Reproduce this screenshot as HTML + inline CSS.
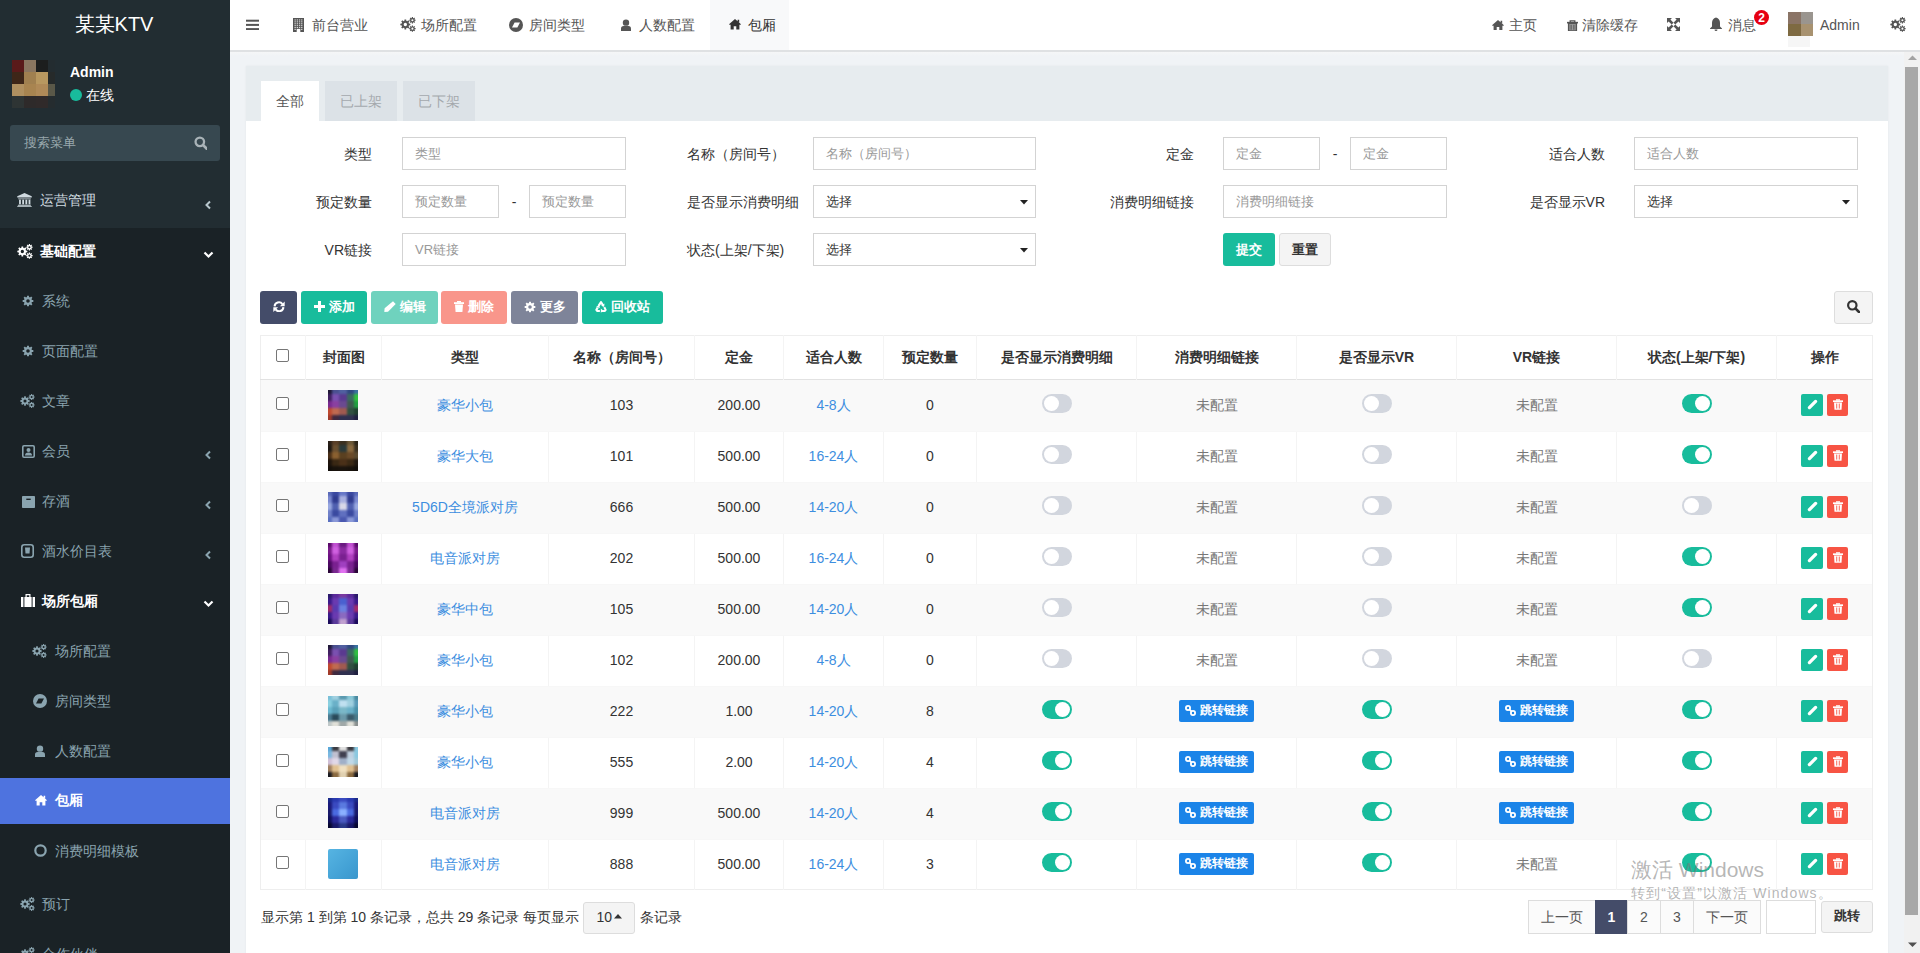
<!DOCTYPE html>
<html><head><meta charset="utf-8"><title>某某KTV</title>
<style>
html,body{margin:0;padding:0;width:1920px;height:953px;overflow:hidden;background:#ecf0f5;font-family:"Liberation Sans", sans-serif;}
.a{position:absolute;white-space:nowrap;}
</style></head><body>
<div class="a" style="left:0px;top:0px;width:230px;height:228px;background:#222d32"></div>
<div class="a" style="left:0px;top:228px;width:230px;height:725px;background:#1a2226"></div>
<div class="a" style="left:-1.0px;width:230px;text-align:center;top:14.0px;font-size:20px;line-height:20px;color:#fff;font-weight:500;">某某KTV</div>
<div class="a" style="left:12px;top:59.5px;width:12px;height:12px;background:#5a1a1a"></div>
<div class="a" style="left:24px;top:59.5px;width:12px;height:12px;background:#8a7660"></div>
<div class="a" style="left:36px;top:59.5px;width:12px;height:12px;background:#1c1e1e"></div>
<div class="a" style="left:48px;top:59.5px;width:7px;height:12px;background:#232c30"></div>
<div class="a" style="left:12px;top:71.5px;width:12px;height:12px;background:#3e2618"></div>
<div class="a" style="left:24px;top:71.5px;width:12px;height:12px;background:#a08050"></div>
<div class="a" style="left:36px;top:71.5px;width:12px;height:12px;background:#b89860"></div>
<div class="a" style="left:48px;top:71.5px;width:7px;height:12px;background:#262a2a"></div>
<div class="a" style="left:12px;top:83.5px;width:12px;height:12px;background:#b09060"></div>
<div class="a" style="left:24px;top:83.5px;width:12px;height:12px;background:#a88450"></div>
<div class="a" style="left:36px;top:83.5px;width:12px;height:12px;background:#b08a58"></div>
<div class="a" style="left:48px;top:83.5px;width:7px;height:12px;background:#5a5848"></div>
<div class="a" style="left:12px;top:95.5px;width:12px;height:12px;background:#2e3434"></div>
<div class="a" style="left:24px;top:95.5px;width:12px;height:12px;background:#2e2a2a"></div>
<div class="a" style="left:36px;top:95.5px;width:12px;height:12px;background:#302a2a"></div>
<div class="a" style="left:48px;top:95.5px;width:7px;height:12px;background:#252c2f"></div>
<div class="a" style="left:70px;top:62.0px;font-size:14px;line-height:20px;color:#fff;font-weight:bold;">Admin</div>
<div class="a" style="left:70px;top:89px;width:12px;height:12px;background:#18bc9c;border-radius:50%"></div>
<div class="a" style="left:86px;top:85.0px;font-size:14px;line-height:20px;color:#fff;">在线</div>
<div class="a" style="left:10px;top:125px;width:210px;height:36px;background:#374850;border-radius:3px"></div>
<div class="a" style="left:24px;top:132.5px;font-size:13px;line-height:20px;color:#9aa8ae;">搜索菜单</div>
<div class="a" style="left:193.5px;top:136px;line-height:0"><svg width="13.5" height="13.5" viewBox="0 0 13 13" style=""><circle cx="5.6" cy="5.6" r="4.1" fill="none" stroke="#a9b3b8" stroke-width="2.2"/><path d="M8.8 8.8 L12.3 12.3" stroke="#a9b3b8" stroke-width="2.6" stroke-linecap="round"/></svg></div>
<div class="a" style="left:16.5px;top:192.5px;line-height:0"><svg width="15" height="14.5" viewBox="0 0 16 16" style=""><path fill="#d0dae0" d="M8 0 L16 3.5 V5 H0 V3.5 Z M1 6 H15 V7 H1 Z M2 7.5 H4 V12.5 H2 Z M5.5 7.5 H7.5 V12.5 H5.5 Z M9 7.5 H11 V12.5 H9 Z M12.5 7.5 H14.5 V12.5 H12.5 Z M1 13 H15 V14.2 H0.5 Z M0 14.5 H16 V16 H0 Z"/></svg></div>
<div class="a" style="left:40px;top:189.6px;font-size:14px;line-height:20px;color:#d3dde2;">运营管理</div>
<div class="a" style="left:204px;top:200px;line-height:0"><svg width="8" height="10" viewBox="0 0 8 10" style=""><path d="M6 1.5 L2.5 5 L6 8.5" fill="none" stroke="#b8c7ce" stroke-width="2"/></svg></div>
<div class="a" style="left:17px;top:244px;line-height:0"><svg width="16" height="14.93" viewBox="0 0 19.2 17.92" style=""><path fill="#fff" fill-rule="nonzero" d="M10.75 7.81 L12.42 7.96 L12.42 9.96 L10.75 10.11 L10.29 11.22 L11.36 12.51 L9.95 13.92 L8.66 12.85 L7.55 13.31 L7.40 14.98 L5.40 14.98 L5.25 13.31 L4.14 12.85 L2.85 13.92 L1.44 12.51 L2.51 11.22 L2.05 10.11 L0.38 9.96 L0.38 7.96 L2.05 7.81 L2.51 6.70 L1.44 5.41 L2.85 4.00 L4.14 5.07 L5.25 4.61 L5.40 2.94 L7.40 2.94 L7.55 4.61 L8.66 5.07 L9.95 4.00 L11.36 5.41 L10.29 6.70 Z M4.40 8.96 a2.00 2.00 0 1 0 4.00 0 a2.00 2.00 0 1 0 -4.00 0 ZM17.60 3.15 L18.74 3.21 L18.74 4.59 L17.60 4.65 L17.34 5.28 L18.10 6.13 L17.13 7.10 L16.28 6.34 L15.65 6.60 L15.59 7.74 L14.21 7.74 L14.15 6.60 L13.52 6.34 L12.67 7.10 L11.70 6.13 L12.46 5.28 L12.20 4.65 L11.06 4.59 L11.06 3.21 L12.20 3.15 L12.46 2.52 L11.70 1.67 L12.67 0.70 L13.52 1.46 L14.15 1.20 L14.21 0.06 L15.59 0.06 L15.65 1.20 L16.28 1.46 L17.13 0.70 L18.10 1.67 L17.34 2.52 Z M13.65 3.90 a1.25 1.25 0 1 0 2.50 0 a1.25 1.25 0 1 0 -2.50 0 ZM17.60 13.25 L18.74 13.31 L18.74 14.69 L17.60 14.75 L17.34 15.38 L18.10 16.23 L17.13 17.20 L16.28 16.44 L15.65 16.70 L15.59 17.84 L14.21 17.84 L14.15 16.70 L13.52 16.44 L12.67 17.20 L11.70 16.23 L12.46 15.38 L12.20 14.75 L11.06 14.69 L11.06 13.31 L12.20 13.25 L12.46 12.62 L11.70 11.77 L12.67 10.80 L13.52 11.56 L14.15 11.30 L14.21 10.16 L15.59 10.16 L15.65 11.30 L16.28 11.56 L17.13 10.80 L18.10 11.77 L17.34 12.62 Z M13.65 14.00 a1.25 1.25 0 1 0 2.50 0 a1.25 1.25 0 1 0 -2.50 0 Z"/></svg></div>
<div class="a" style="left:40px;top:241.0px;font-size:14px;line-height:20px;color:#fff;font-weight:bold;">基础配置</div>
<div class="a" style="left:203px;top:251px;line-height:0"><svg width="11" height="8" viewBox="0 0 11 8" style=""><path d="M1.5 1.5 L5.5 5.5 L9.5 1.5" fill="none" stroke="#fff" stroke-width="2.2"/></svg></div>
<div class="a" style="left:22px;top:295px;line-height:0"><svg width="12" height="12" viewBox="0 0 16 16" style=""><path fill="#8aa4af" fill-rule="evenodd" d="M13.22 6.62 L15.10 6.82 L15.10 9.18 L13.22 9.38 L12.67 10.71 L13.86 12.19 L12.19 13.86 L10.71 12.67 L9.38 13.22 L9.18 15.10 L6.82 15.10 L6.62 13.22 L5.29 12.67 L3.81 13.86 L2.14 12.19 L3.33 10.71 L2.78 9.38 L0.90 9.18 L0.90 6.82 L2.78 6.62 L3.33 5.29 L2.14 3.81 L3.81 2.14 L5.29 3.33 L6.62 2.78 L6.82 0.90 L9.18 0.90 L9.38 2.78 L10.71 3.33 L12.19 2.14 L13.86 3.81 L12.67 5.29 Z M5.60 8.00 a2.40 2.40 0 1 0 4.80 0 a2.40 2.40 0 1 0 -4.80 0 Z"/></svg></div>
<div class="a" style="left:42px;top:291.0px;font-size:14px;line-height:20px;color:#8aa4af;">系统</div>
<div class="a" style="left:22px;top:345px;line-height:0"><svg width="12" height="12" viewBox="0 0 16 16" style=""><path fill="#8aa4af" fill-rule="evenodd" d="M13.22 6.62 L15.10 6.82 L15.10 9.18 L13.22 9.38 L12.67 10.71 L13.86 12.19 L12.19 13.86 L10.71 12.67 L9.38 13.22 L9.18 15.10 L6.82 15.10 L6.62 13.22 L5.29 12.67 L3.81 13.86 L2.14 12.19 L3.33 10.71 L2.78 9.38 L0.90 9.18 L0.90 6.82 L2.78 6.62 L3.33 5.29 L2.14 3.81 L3.81 2.14 L5.29 3.33 L6.62 2.78 L6.82 0.90 L9.18 0.90 L9.38 2.78 L10.71 3.33 L12.19 2.14 L13.86 3.81 L12.67 5.29 Z M5.60 8.00 a2.40 2.40 0 1 0 4.80 0 a2.40 2.40 0 1 0 -4.80 0 Z"/></svg></div>
<div class="a" style="left:42px;top:341.0px;font-size:14px;line-height:20px;color:#8aa4af;">页面配置</div>
<div class="a" style="left:20px;top:394px;line-height:0"><svg width="15" height="14.0" viewBox="0 0 19.2 17.92" style=""><path fill="#8aa4af" fill-rule="nonzero" d="M10.75 7.81 L12.42 7.96 L12.42 9.96 L10.75 10.11 L10.29 11.22 L11.36 12.51 L9.95 13.92 L8.66 12.85 L7.55 13.31 L7.40 14.98 L5.40 14.98 L5.25 13.31 L4.14 12.85 L2.85 13.92 L1.44 12.51 L2.51 11.22 L2.05 10.11 L0.38 9.96 L0.38 7.96 L2.05 7.81 L2.51 6.70 L1.44 5.41 L2.85 4.00 L4.14 5.07 L5.25 4.61 L5.40 2.94 L7.40 2.94 L7.55 4.61 L8.66 5.07 L9.95 4.00 L11.36 5.41 L10.29 6.70 Z M4.40 8.96 a2.00 2.00 0 1 0 4.00 0 a2.00 2.00 0 1 0 -4.00 0 ZM17.60 3.15 L18.74 3.21 L18.74 4.59 L17.60 4.65 L17.34 5.28 L18.10 6.13 L17.13 7.10 L16.28 6.34 L15.65 6.60 L15.59 7.74 L14.21 7.74 L14.15 6.60 L13.52 6.34 L12.67 7.10 L11.70 6.13 L12.46 5.28 L12.20 4.65 L11.06 4.59 L11.06 3.21 L12.20 3.15 L12.46 2.52 L11.70 1.67 L12.67 0.70 L13.52 1.46 L14.15 1.20 L14.21 0.06 L15.59 0.06 L15.65 1.20 L16.28 1.46 L17.13 0.70 L18.10 1.67 L17.34 2.52 Z M13.65 3.90 a1.25 1.25 0 1 0 2.50 0 a1.25 1.25 0 1 0 -2.50 0 ZM17.60 13.25 L18.74 13.31 L18.74 14.69 L17.60 14.75 L17.34 15.38 L18.10 16.23 L17.13 17.20 L16.28 16.44 L15.65 16.70 L15.59 17.84 L14.21 17.84 L14.15 16.70 L13.52 16.44 L12.67 17.20 L11.70 16.23 L12.46 15.38 L12.20 14.75 L11.06 14.69 L11.06 13.31 L12.20 13.25 L12.46 12.62 L11.70 11.77 L12.67 10.80 L13.52 11.56 L14.15 11.30 L14.21 10.16 L15.59 10.16 L15.65 11.30 L16.28 11.56 L17.13 10.80 L18.10 11.77 L17.34 12.62 Z M13.65 14.00 a1.25 1.25 0 1 0 2.50 0 a1.25 1.25 0 1 0 -2.50 0 Z"/></svg></div>
<div class="a" style="left:42px;top:391.0px;font-size:14px;line-height:20px;color:#8aa4af;">文章</div>
<div class="a" style="left:21.5px;top:444.5px;line-height:0"><svg width="13" height="13" viewBox="0 0 13 13" style=""><rect x="0.8" y="0.8" width="11.4" height="11.4" rx="1.2" fill="none" stroke="#8aa4af" stroke-width="1.6"/><circle cx="6.5" cy="5" r="2" fill="#8aa4af"/><path d="M3 10.5 Q3 7.6 6.5 7.6 Q10 7.6 10 10.5 Z" fill="#8aa4af"/></svg></div>
<div class="a" style="left:42px;top:441.0px;font-size:14px;line-height:20px;color:#8aa4af;">会员</div>
<div class="a" style="left:204px;top:450px;line-height:0"><svg width="8" height="10" viewBox="0 0 8 10" style=""><path d="M6 1.5 L2.5 5 L6 8.5" fill="none" stroke="#8aa4af" stroke-width="2"/></svg></div>
<div class="a" style="left:21.5px;top:495.5px;line-height:0"><svg width="13" height="12" viewBox="0 0 13 12" style=""><rect x="0" y="0" width="13" height="12" rx="0.8" fill="#8aa4af"/><rect x="4.3" y="2.6" width="4.4" height="1.4" fill="#1a2226"/></svg></div>
<div class="a" style="left:42px;top:491.0px;font-size:14px;line-height:20px;color:#8aa4af;">存酒</div>
<div class="a" style="left:204px;top:500px;line-height:0"><svg width="8" height="10" viewBox="0 0 8 10" style=""><path d="M6 1.5 L2.5 5 L6 8.5" fill="none" stroke="#8aa4af" stroke-width="2"/></svg></div>
<div class="a" style="left:21px;top:544px;line-height:0"><svg width="13" height="14" viewBox="0 0 13 14" style=""><rect x="0.8" y="0.8" width="11.4" height="12.4" rx="2.5" fill="none" stroke="#8aa4af" stroke-width="1.6"/><path d="M4 3.5 H9 L8.5 9.5 H4.5 Z" fill="#8aa4af"/></svg></div>
<div class="a" style="left:42px;top:541.0px;font-size:14px;line-height:20px;color:#8aa4af;">酒水价目表</div>
<div class="a" style="left:204px;top:550px;line-height:0"><svg width="8" height="10" viewBox="0 0 8 10" style=""><path d="M6 1.5 L2.5 5 L6 8.5" fill="none" stroke="#8aa4af" stroke-width="2"/></svg></div>
<div class="a" style="left:21px;top:594px;line-height:0"><svg width="14" height="13" viewBox="0 0 14 13" style=""><path fill="#fff" d="M4.5 0 H9.5 V3 H8.3 V1.2 H5.7 V3 H4.5 Z M0 3 H14 V13 H0 Z"/><rect x="2.4" y="3" width="1" height="10" fill="#1a2226"/><rect x="10.6" y="3" width="1" height="10" fill="#1a2226"/></svg></div>
<div class="a" style="left:42px;top:591.0px;font-size:14px;line-height:20px;color:#fff;font-weight:bold;">场所包厢</div>
<div class="a" style="left:203px;top:600px;line-height:0"><svg width="11" height="8" viewBox="0 0 11 8" style=""><path d="M1.5 1.5 L5.5 5.5 L9.5 1.5" fill="none" stroke="#fff" stroke-width="2.2"/></svg></div>
<div class="a" style="left:32px;top:644px;line-height:0"><svg width="15" height="14.0" viewBox="0 0 19.2 17.92" style=""><path fill="#8aa4af" fill-rule="nonzero" d="M10.75 7.81 L12.42 7.96 L12.42 9.96 L10.75 10.11 L10.29 11.22 L11.36 12.51 L9.95 13.92 L8.66 12.85 L7.55 13.31 L7.40 14.98 L5.40 14.98 L5.25 13.31 L4.14 12.85 L2.85 13.92 L1.44 12.51 L2.51 11.22 L2.05 10.11 L0.38 9.96 L0.38 7.96 L2.05 7.81 L2.51 6.70 L1.44 5.41 L2.85 4.00 L4.14 5.07 L5.25 4.61 L5.40 2.94 L7.40 2.94 L7.55 4.61 L8.66 5.07 L9.95 4.00 L11.36 5.41 L10.29 6.70 Z M4.40 8.96 a2.00 2.00 0 1 0 4.00 0 a2.00 2.00 0 1 0 -4.00 0 ZM17.60 3.15 L18.74 3.21 L18.74 4.59 L17.60 4.65 L17.34 5.28 L18.10 6.13 L17.13 7.10 L16.28 6.34 L15.65 6.60 L15.59 7.74 L14.21 7.74 L14.15 6.60 L13.52 6.34 L12.67 7.10 L11.70 6.13 L12.46 5.28 L12.20 4.65 L11.06 4.59 L11.06 3.21 L12.20 3.15 L12.46 2.52 L11.70 1.67 L12.67 0.70 L13.52 1.46 L14.15 1.20 L14.21 0.06 L15.59 0.06 L15.65 1.20 L16.28 1.46 L17.13 0.70 L18.10 1.67 L17.34 2.52 Z M13.65 3.90 a1.25 1.25 0 1 0 2.50 0 a1.25 1.25 0 1 0 -2.50 0 ZM17.60 13.25 L18.74 13.31 L18.74 14.69 L17.60 14.75 L17.34 15.38 L18.10 16.23 L17.13 17.20 L16.28 16.44 L15.65 16.70 L15.59 17.84 L14.21 17.84 L14.15 16.70 L13.52 16.44 L12.67 17.20 L11.70 16.23 L12.46 15.38 L12.20 14.75 L11.06 14.69 L11.06 13.31 L12.20 13.25 L12.46 12.62 L11.70 11.77 L12.67 10.80 L13.52 11.56 L14.15 11.30 L14.21 10.16 L15.59 10.16 L15.65 11.30 L16.28 11.56 L17.13 10.80 L18.10 11.77 L17.34 12.62 Z M13.65 14.00 a1.25 1.25 0 1 0 2.50 0 a1.25 1.25 0 1 0 -2.50 0 Z"/></svg></div>
<div class="a" style="left:54.5px;top:641.0px;font-size:14px;line-height:20px;color:#8aa4af;">场所配置</div>
<div class="a" style="left:33px;top:694px;line-height:0"><svg width="14" height="14" viewBox="0 0 14 14" style=""><circle cx="7" cy="7" r="7" fill="#8aa4af"/><path d="M5.6 4.6 H11 L8.4 9.4 H3 Z" fill="#1a2226"/></svg></div>
<div class="a" style="left:54.5px;top:691.0px;font-size:14px;line-height:20px;color:#8aa4af;">房间类型</div>
<div class="a" style="left:34.5px;top:744.5px;line-height:0"><svg width="10" height="12.5" viewBox="0 0 10 12" style=""><circle cx="5" cy="3.4" r="3.2" fill="#8aa4af"/><path d="M0 12.5 V9.6 Q0 6.8 2.6 6.8 H7.4 Q10 6.8 10 9.6 V12.5 Z" fill="#8aa4af"/></svg></div>
<div class="a" style="left:54.5px;top:741.0px;font-size:14px;line-height:20px;color:#8aa4af;">人数配置</div>
<div class="a" style="left:0px;top:778px;width:230px;height:46px;background:#4e73df"></div>
<div class="a" style="left:34.5px;top:795px;line-height:0"><svg width="12" height="10.5" viewBox="0 0 12 10.5" style=""><path d="M6 0 L12 5.2 L11 6.1 L10.4 5.6 V10.5 H7.3 V7.3 H4.7 V10.5 H1.6 V5.6 L1 6.1 L0 5.2 Z M8.6 0.8 H10.2 V3.6 L8.6 2.2 Z" fill="#fff"/></svg></div>
<div class="a" style="left:54.5px;top:790.0px;font-size:14px;line-height:20px;color:#fff;font-weight:bold;">包厢</div>
<div class="a" style="left:34px;top:844px;line-height:0"><svg width="13" height="13" viewBox="0 0 13 13" style=""><circle cx="6.5" cy="6.5" r="5.2" fill="none" stroke="#8aa4af" stroke-width="2.2"/></svg></div>
<div class="a" style="left:54.5px;top:841.0px;font-size:14px;line-height:20px;color:#8aa4af;">消费明细模板</div>
<div class="a" style="left:20px;top:897px;line-height:0"><svg width="15" height="14.0" viewBox="0 0 19.2 17.92" style=""><path fill="#8aa4af" fill-rule="nonzero" d="M10.75 7.81 L12.42 7.96 L12.42 9.96 L10.75 10.11 L10.29 11.22 L11.36 12.51 L9.95 13.92 L8.66 12.85 L7.55 13.31 L7.40 14.98 L5.40 14.98 L5.25 13.31 L4.14 12.85 L2.85 13.92 L1.44 12.51 L2.51 11.22 L2.05 10.11 L0.38 9.96 L0.38 7.96 L2.05 7.81 L2.51 6.70 L1.44 5.41 L2.85 4.00 L4.14 5.07 L5.25 4.61 L5.40 2.94 L7.40 2.94 L7.55 4.61 L8.66 5.07 L9.95 4.00 L11.36 5.41 L10.29 6.70 Z M4.40 8.96 a2.00 2.00 0 1 0 4.00 0 a2.00 2.00 0 1 0 -4.00 0 ZM17.60 3.15 L18.74 3.21 L18.74 4.59 L17.60 4.65 L17.34 5.28 L18.10 6.13 L17.13 7.10 L16.28 6.34 L15.65 6.60 L15.59 7.74 L14.21 7.74 L14.15 6.60 L13.52 6.34 L12.67 7.10 L11.70 6.13 L12.46 5.28 L12.20 4.65 L11.06 4.59 L11.06 3.21 L12.20 3.15 L12.46 2.52 L11.70 1.67 L12.67 0.70 L13.52 1.46 L14.15 1.20 L14.21 0.06 L15.59 0.06 L15.65 1.20 L16.28 1.46 L17.13 0.70 L18.10 1.67 L17.34 2.52 Z M13.65 3.90 a1.25 1.25 0 1 0 2.50 0 a1.25 1.25 0 1 0 -2.50 0 ZM17.60 13.25 L18.74 13.31 L18.74 14.69 L17.60 14.75 L17.34 15.38 L18.10 16.23 L17.13 17.20 L16.28 16.44 L15.65 16.70 L15.59 17.84 L14.21 17.84 L14.15 16.70 L13.52 16.44 L12.67 17.20 L11.70 16.23 L12.46 15.38 L12.20 14.75 L11.06 14.69 L11.06 13.31 L12.20 13.25 L12.46 12.62 L11.70 11.77 L12.67 10.80 L13.52 11.56 L14.15 11.30 L14.21 10.16 L15.59 10.16 L15.65 11.30 L16.28 11.56 L17.13 10.80 L18.10 11.77 L17.34 12.62 Z M13.65 14.00 a1.25 1.25 0 1 0 2.50 0 a1.25 1.25 0 1 0 -2.50 0 Z"/></svg></div>
<div class="a" style="left:42px;top:894.0px;font-size:14px;line-height:20px;color:#8aa4af;">预订</div>
<div class="a" style="left:20px;top:947px;line-height:0"><svg width="15" height="14.0" viewBox="0 0 19.2 17.92" style=""><path fill="#8aa4af" fill-rule="nonzero" d="M10.75 7.81 L12.42 7.96 L12.42 9.96 L10.75 10.11 L10.29 11.22 L11.36 12.51 L9.95 13.92 L8.66 12.85 L7.55 13.31 L7.40 14.98 L5.40 14.98 L5.25 13.31 L4.14 12.85 L2.85 13.92 L1.44 12.51 L2.51 11.22 L2.05 10.11 L0.38 9.96 L0.38 7.96 L2.05 7.81 L2.51 6.70 L1.44 5.41 L2.85 4.00 L4.14 5.07 L5.25 4.61 L5.40 2.94 L7.40 2.94 L7.55 4.61 L8.66 5.07 L9.95 4.00 L11.36 5.41 L10.29 6.70 Z M4.40 8.96 a2.00 2.00 0 1 0 4.00 0 a2.00 2.00 0 1 0 -4.00 0 ZM17.60 3.15 L18.74 3.21 L18.74 4.59 L17.60 4.65 L17.34 5.28 L18.10 6.13 L17.13 7.10 L16.28 6.34 L15.65 6.60 L15.59 7.74 L14.21 7.74 L14.15 6.60 L13.52 6.34 L12.67 7.10 L11.70 6.13 L12.46 5.28 L12.20 4.65 L11.06 4.59 L11.06 3.21 L12.20 3.15 L12.46 2.52 L11.70 1.67 L12.67 0.70 L13.52 1.46 L14.15 1.20 L14.21 0.06 L15.59 0.06 L15.65 1.20 L16.28 1.46 L17.13 0.70 L18.10 1.67 L17.34 2.52 Z M13.65 3.90 a1.25 1.25 0 1 0 2.50 0 a1.25 1.25 0 1 0 -2.50 0 ZM17.60 13.25 L18.74 13.31 L18.74 14.69 L17.60 14.75 L17.34 15.38 L18.10 16.23 L17.13 17.20 L16.28 16.44 L15.65 16.70 L15.59 17.84 L14.21 17.84 L14.15 16.70 L13.52 16.44 L12.67 17.20 L11.70 16.23 L12.46 15.38 L12.20 14.75 L11.06 14.69 L11.06 13.31 L12.20 13.25 L12.46 12.62 L11.70 11.77 L12.67 10.80 L13.52 11.56 L14.15 11.30 L14.21 10.16 L15.59 10.16 L15.65 11.30 L16.28 11.56 L17.13 10.80 L18.10 11.77 L17.34 12.62 Z M13.65 14.00 a1.25 1.25 0 1 0 2.50 0 a1.25 1.25 0 1 0 -2.50 0 Z"/></svg></div>
<div class="a" style="left:42px;top:944.0px;font-size:14px;line-height:20px;color:#8aa4af;">合作伙伴</div>
<div class="a" style="left:230px;top:0px;width:1690px;height:50px;background:#fff"></div>
<div class="a" style="left:246px;top:19px;line-height:0"><svg width="13" height="11" viewBox="0 0 13 11" style=""><rect y="0.7" width="13" height="2" fill="#555"/><rect y="4.9" width="13" height="2" fill="#555"/><rect y="9.1" width="13" height="2" fill="#555"/></svg></div>
<div class="a" style="left:293px;top:18px;line-height:0"><svg width="11" height="14" viewBox="0 0 11 14" style=""><rect x="0" y="0" width="11" height="14" fill="#555"/><rect x="1.5" y="1.4" width="1.3" height="1.1" fill="#d8d8d8"/><rect x="3.7" y="1.4" width="1.3" height="1.1" fill="#d8d8d8"/><rect x="5.9" y="1.4" width="1.3" height="1.1" fill="#d8d8d8"/><rect x="8.100000000000001" y="1.4" width="1.3" height="1.1" fill="#d8d8d8"/><rect x="1.5" y="3.3" width="1.3" height="1.1" fill="#d8d8d8"/><rect x="3.7" y="3.3" width="1.3" height="1.1" fill="#d8d8d8"/><rect x="5.9" y="3.3" width="1.3" height="1.1" fill="#d8d8d8"/><rect x="8.100000000000001" y="3.3" width="1.3" height="1.1" fill="#d8d8d8"/><rect x="1.5" y="5.199999999999999" width="1.3" height="1.1" fill="#d8d8d8"/><rect x="3.7" y="5.199999999999999" width="1.3" height="1.1" fill="#d8d8d8"/><rect x="5.9" y="5.199999999999999" width="1.3" height="1.1" fill="#d8d8d8"/><rect x="8.100000000000001" y="5.199999999999999" width="1.3" height="1.1" fill="#d8d8d8"/><rect x="1.5" y="7.1" width="1.3" height="1.1" fill="#d8d8d8"/><rect x="3.7" y="7.1" width="1.3" height="1.1" fill="#d8d8d8"/><rect x="5.9" y="7.1" width="1.3" height="1.1" fill="#d8d8d8"/><rect x="8.100000000000001" y="7.1" width="1.3" height="1.1" fill="#d8d8d8"/><rect x="1.5" y="9.0" width="1.3" height="1.1" fill="#d8d8d8"/><rect x="3.7" y="9.0" width="1.3" height="1.1" fill="#d8d8d8"/><rect x="5.9" y="9.0" width="1.3" height="1.1" fill="#d8d8d8"/><rect x="8.100000000000001" y="9.0" width="1.3" height="1.1" fill="#d8d8d8"/><rect x="1.5" y="10.9" width="1.3" height="1.1" fill="#d8d8d8"/><rect x="8.100000000000001" y="10.9" width="1.3" height="1.1" fill="#d8d8d8"/><rect x="3.7" y="10.9" width="3.6" height="3.1" fill="#fff"/></svg></div>
<div class="a" style="left:312px;top:15.0px;font-size:14px;line-height:20px;color:#555;">前台营业</div>
<div class="a" style="left:400px;top:17px;line-height:0"><svg width="16" height="14.93" viewBox="0 0 19.2 17.92" style=""><path fill="#555" fill-rule="nonzero" d="M10.75 7.81 L12.42 7.96 L12.42 9.96 L10.75 10.11 L10.29 11.22 L11.36 12.51 L9.95 13.92 L8.66 12.85 L7.55 13.31 L7.40 14.98 L5.40 14.98 L5.25 13.31 L4.14 12.85 L2.85 13.92 L1.44 12.51 L2.51 11.22 L2.05 10.11 L0.38 9.96 L0.38 7.96 L2.05 7.81 L2.51 6.70 L1.44 5.41 L2.85 4.00 L4.14 5.07 L5.25 4.61 L5.40 2.94 L7.40 2.94 L7.55 4.61 L8.66 5.07 L9.95 4.00 L11.36 5.41 L10.29 6.70 Z M4.40 8.96 a2.00 2.00 0 1 0 4.00 0 a2.00 2.00 0 1 0 -4.00 0 ZM17.60 3.15 L18.74 3.21 L18.74 4.59 L17.60 4.65 L17.34 5.28 L18.10 6.13 L17.13 7.10 L16.28 6.34 L15.65 6.60 L15.59 7.74 L14.21 7.74 L14.15 6.60 L13.52 6.34 L12.67 7.10 L11.70 6.13 L12.46 5.28 L12.20 4.65 L11.06 4.59 L11.06 3.21 L12.20 3.15 L12.46 2.52 L11.70 1.67 L12.67 0.70 L13.52 1.46 L14.15 1.20 L14.21 0.06 L15.59 0.06 L15.65 1.20 L16.28 1.46 L17.13 0.70 L18.10 1.67 L17.34 2.52 Z M13.65 3.90 a1.25 1.25 0 1 0 2.50 0 a1.25 1.25 0 1 0 -2.50 0 ZM17.60 13.25 L18.74 13.31 L18.74 14.69 L17.60 14.75 L17.34 15.38 L18.10 16.23 L17.13 17.20 L16.28 16.44 L15.65 16.70 L15.59 17.84 L14.21 17.84 L14.15 16.70 L13.52 16.44 L12.67 17.20 L11.70 16.23 L12.46 15.38 L12.20 14.75 L11.06 14.69 L11.06 13.31 L12.20 13.25 L12.46 12.62 L11.70 11.77 L12.67 10.80 L13.52 11.56 L14.15 11.30 L14.21 10.16 L15.59 10.16 L15.65 11.30 L16.28 11.56 L17.13 10.80 L18.10 11.77 L17.34 12.62 Z M13.65 14.00 a1.25 1.25 0 1 0 2.50 0 a1.25 1.25 0 1 0 -2.50 0 Z"/></svg></div>
<div class="a" style="left:421px;top:15.0px;font-size:14px;line-height:20px;color:#555;">场所配置</div>
<div class="a" style="left:509px;top:18px;line-height:0"><svg width="14" height="14" viewBox="0 0 14 14" style=""><circle cx="7" cy="7" r="7" fill="#555"/><path d="M5.6 4.6 H11 L8.4 9.4 H3 Z" fill="#fff"/></svg></div>
<div class="a" style="left:529px;top:15.0px;font-size:14px;line-height:20px;color:#555;">房间类型</div>
<div class="a" style="left:620.5px;top:18.5px;line-height:0"><svg width="10" height="12.5" viewBox="0 0 10 12" style=""><circle cx="5" cy="3.4" r="3.2" fill="#555"/><path d="M0 12.5 V9.6 Q0 6.8 2.6 6.8 H7.4 Q10 6.8 10 9.6 V12.5 Z" fill="#555"/></svg></div>
<div class="a" style="left:639px;top:15.0px;font-size:14px;line-height:20px;color:#555;">人数配置</div>
<div class="a" style="left:710px;top:0px;width:79px;height:50px;background:#f8f9fa"></div>
<div class="a" style="left:728.5px;top:19px;line-height:0"><svg width="12" height="10.5" viewBox="0 0 12 10.5" style=""><path d="M6 0 L12 5.2 L11 6.1 L10.4 5.6 V10.5 H7.3 V7.3 H4.7 V10.5 H1.6 V5.6 L1 6.1 L0 5.2 Z M8.6 0.8 H10.2 V3.6 L8.6 2.2 Z" fill="#333"/></svg></div>
<div class="a" style="left:748px;top:15.0px;font-size:14px;line-height:20px;color:#333;">包厢</div>
<div class="a" style="left:1492px;top:20px;line-height:0"><svg width="12" height="10" viewBox="0 0 12 10" style=""><path d="M6 0 L12 5.2 L11 6.1 L10.4 5.6 V10 H7.3 V7 H4.7 V10 H1.6 V5.6 L1 6.1 L0 5.2 Z M8.6 0.8 H10.2 V3.6 L8.6 2.2 Z" fill="#555"/></svg></div>
<div class="a" style="left:1509px;top:15.0px;font-size:14px;line-height:20px;color:#555;">主页</div>
<div class="a" style="left:1567px;top:19.5px;line-height:0"><svg width="11" height="11.5" viewBox="0 0 11 11" style=""><path d="M3.2 2 V0.6 H7.8 V2" fill="none" stroke="#555" stroke-width="1.3"/><rect x="0" y="1.6" width="11" height="1.6" fill="#555"/><path d="M1.6 3 H9.4 V10.6 H1.6 Z" fill="#999" stroke="#555" stroke-width="1.4"/><rect x="3.6" y="4.5" width="1" height="5" fill="#555"/><rect x="6.4" y="4.5" width="1" height="5" fill="#555"/></svg></div>
<div class="a" style="left:1582px;top:15.0px;font-size:14px;line-height:20px;color:#555;">清除缓存</div>
<div class="a" style="left:1667px;top:18px;line-height:0"><svg width="13" height="13" viewBox="0 0 13 13" style=""><path d="M0 0 H5 L3.4 1.6 L6.5 4.7 L4.7 6.5 L1.6 3.4 L0 5 Z M13 0 V5 L11.4 3.4 L8.3 6.5 L6.5 4.7 L9.6 1.6 L8 0 Z M0 13 V8 L1.6 9.6 L4.7 6.5 L6.5 8.3 L3.4 11.4 L5 13 Z M13 13 H8 L9.6 11.4 L6.5 8.3 L8.3 6.5 L11.4 9.6 L13 8 Z" fill="#555"/></svg></div>
<div class="a" style="left:1710px;top:17px;line-height:0"><svg width="12" height="14" viewBox="0 0 12 14" style=""><path d="M6 0.5 Q10 1.5 10 6 V9.5 L12 11.5 V12 H0 V11.5 L2 9.5 V6 Q2 1.5 6 0.5 Z M4.5 12.5 H7.5 Q7.5 14 6 14 Q4.5 14 4.5 12.5 Z" fill="#555"/></svg></div>
<div class="a" style="left:1728px;top:15.0px;font-size:14px;line-height:20px;color:#555;">消息</div>
<div class="a" style="left:1754px;top:10px;width:15px;height:15px;background:#e60012;border-radius:50%"></div>
<div class="a" style="left:1754.0px;width:15px;text-align:center;top:7.5px;font-size:12px;line-height:20px;color:#fff;font-weight:bold;">2</div>
<div class="a" style="left:1788.0px;top:12px;width:12.5px;height:12px;background:#8a7466"></div>
<div class="a" style="left:1800.5px;top:12px;width:12.5px;height:12px;background:#9a958f"></div>
<div class="a" style="left:1788.0px;top:24px;width:12.5px;height:12px;background:#7e6a42"></div>
<div class="a" style="left:1800.5px;top:24px;width:12.5px;height:12px;background:#a89270"></div>
<div class="a" style="left:1788px;top:36px;width:22px;height:11px;background:#f6f6f6"></div>
<div class="a" style="left:1820px;top:15.0px;font-size:14px;line-height:20px;color:#555;">Admin</div>
<div class="a" style="left:1890px;top:17px;line-height:0"><svg width="16" height="14.93" viewBox="0 0 19.2 17.92" style=""><path fill="#555" fill-rule="nonzero" d="M10.75 7.81 L12.42 7.96 L12.42 9.96 L10.75 10.11 L10.29 11.22 L11.36 12.51 L9.95 13.92 L8.66 12.85 L7.55 13.31 L7.40 14.98 L5.40 14.98 L5.25 13.31 L4.14 12.85 L2.85 13.92 L1.44 12.51 L2.51 11.22 L2.05 10.11 L0.38 9.96 L0.38 7.96 L2.05 7.81 L2.51 6.70 L1.44 5.41 L2.85 4.00 L4.14 5.07 L5.25 4.61 L5.40 2.94 L7.40 2.94 L7.55 4.61 L8.66 5.07 L9.95 4.00 L11.36 5.41 L10.29 6.70 Z M4.40 8.96 a2.00 2.00 0 1 0 4.00 0 a2.00 2.00 0 1 0 -4.00 0 ZM17.60 3.15 L18.74 3.21 L18.74 4.59 L17.60 4.65 L17.34 5.28 L18.10 6.13 L17.13 7.10 L16.28 6.34 L15.65 6.60 L15.59 7.74 L14.21 7.74 L14.15 6.60 L13.52 6.34 L12.67 7.10 L11.70 6.13 L12.46 5.28 L12.20 4.65 L11.06 4.59 L11.06 3.21 L12.20 3.15 L12.46 2.52 L11.70 1.67 L12.67 0.70 L13.52 1.46 L14.15 1.20 L14.21 0.06 L15.59 0.06 L15.65 1.20 L16.28 1.46 L17.13 0.70 L18.10 1.67 L17.34 2.52 Z M13.65 3.90 a1.25 1.25 0 1 0 2.50 0 a1.25 1.25 0 1 0 -2.50 0 ZM17.60 13.25 L18.74 13.31 L18.74 14.69 L17.60 14.75 L17.34 15.38 L18.10 16.23 L17.13 17.20 L16.28 16.44 L15.65 16.70 L15.59 17.84 L14.21 17.84 L14.15 16.70 L13.52 16.44 L12.67 17.20 L11.70 16.23 L12.46 15.38 L12.20 14.75 L11.06 14.69 L11.06 13.31 L12.20 13.25 L12.46 12.62 L11.70 11.77 L12.67 10.80 L13.52 11.56 L14.15 11.30 L14.21 10.16 L15.59 10.16 L15.65 11.30 L16.28 11.56 L17.13 10.80 L18.10 11.77 L17.34 12.62 Z M13.65 14.00 a1.25 1.25 0 1 0 2.50 0 a1.25 1.25 0 1 0 -2.50 0 Z"/></svg></div>
<div class="a" style="left:230px;top:50px;width:1690px;height:903px;background:#f0f3f6"></div>
<div class="a" style="left:230px;top:52px;width:1674px;height:4px;background:linear-gradient(#f5f6f7,#f0f3f6)"></div>
<div class="a" style="left:1904px;top:52px;width:16px;height:901px;background:#f1f1f1"></div>
<div class="a" style="left:230px;top:50px;width:1690px;height:2px;background:#dfe1e3"></div>
<div class="a" style="left:1905px;top:67px;width:13px;height:848px;background:#a8a8a8"></div>
<div class="a" style="left:1908px;top:55px;line-height:0"><svg width="9" height="6" viewBox="0 0 9 6" style=""><path d="M0 5 L4.5 0.5 L9 5 Z" fill="#a3a3a3"/></svg></div>
<div class="a" style="left:1908px;top:942px;line-height:0"><svg width="9" height="6" viewBox="0 0 9 6" style=""><path d="M0 0.5 L4.5 5 L9 0.5 Z" fill="#505050"/></svg></div>
<div class="a" style="left:246px;top:66px;width:1642px;height:890px;background:#fff;box-shadow:0 0 2px rgba(0,0,0,0.06)"></div>
<div class="a" style="left:246px;top:66px;width:1642px;height:55px;background:#e7ecef"></div>
<div class="a" style="left:261px;top:81px;width:58px;height:40px;background:#fff"></div>
<div class="a" style="left:261.0px;width:58px;text-align:center;top:91.0px;font-size:14px;line-height:20px;color:#555;">全部</div>
<div class="a" style="left:325px;top:81px;width:72px;height:40px;background:#dce2e7"></div>
<div class="a" style="left:325.0px;width:72px;text-align:center;top:91.0px;font-size:14px;line-height:20px;color:#a4a9ad;">已上架</div>
<div class="a" style="left:403px;top:81px;width:72px;height:40px;background:#dce2e7"></div>
<div class="a" style="left:403.0px;width:72px;text-align:center;top:91.0px;font-size:14px;line-height:20px;color:#a4a9ad;">已下架</div>
<div class="a" style="left:252px;width:120px;text-align:right;top:144.0px;font-size:14px;line-height:20px;color:#333;">类型</div>
<div class="a" style="left:402px;top:137px;width:224px;height:33px;background:#fff;border:1px solid #d3d3d3;box-sizing:border-box"></div>
<div class="a" style="left:415px;top:143.5px;font-size:13px;line-height:20px;color:#999;">类型</div>
<div class="a" style="left:687px;top:144.0px;font-size:14px;line-height:20px;color:#333;">名称（房间号）</div>
<div class="a" style="left:813px;top:137px;width:223px;height:33px;background:#fff;border:1px solid #d3d3d3;box-sizing:border-box"></div>
<div class="a" style="left:826px;top:143.5px;font-size:13px;line-height:20px;color:#999;">名称（房间号）</div>
<div class="a" style="left:1074px;width:120px;text-align:right;top:144.0px;font-size:14px;line-height:20px;color:#333;">定金</div>
<div class="a" style="left:1223px;top:137px;width:97px;height:33px;background:#fff;border:1px solid #d3d3d3;box-sizing:border-box"></div>
<div class="a" style="left:1236px;top:143.5px;font-size:13px;line-height:20px;color:#999;">定金</div>
<div class="a" style="left:1330.0px;width:10px;text-align:center;top:144.0px;font-size:14px;line-height:20px;color:#333;">-</div>
<div class="a" style="left:1350px;top:137px;width:97px;height:33px;background:#fff;border:1px solid #d3d3d3;box-sizing:border-box"></div>
<div class="a" style="left:1363px;top:143.5px;font-size:13px;line-height:20px;color:#999;">定金</div>
<div class="a" style="left:1485px;width:120px;text-align:right;top:144.0px;font-size:14px;line-height:20px;color:#333;">适合人数</div>
<div class="a" style="left:1634px;top:137px;width:224px;height:33px;background:#fff;border:1px solid #d3d3d3;box-sizing:border-box"></div>
<div class="a" style="left:1647px;top:143.5px;font-size:13px;line-height:20px;color:#999;">适合人数</div>
<div class="a" style="left:252px;width:120px;text-align:right;top:192.0px;font-size:14px;line-height:20px;color:#333;">预定数量</div>
<div class="a" style="left:402px;top:185px;width:97px;height:33px;background:#fff;border:1px solid #d3d3d3;box-sizing:border-box"></div>
<div class="a" style="left:415px;top:191.5px;font-size:13px;line-height:20px;color:#999;">预定数量</div>
<div class="a" style="left:509.0px;width:10px;text-align:center;top:192.0px;font-size:14px;line-height:20px;color:#333;">-</div>
<div class="a" style="left:529px;top:185px;width:97px;height:33px;background:#fff;border:1px solid #d3d3d3;box-sizing:border-box"></div>
<div class="a" style="left:542px;top:191.5px;font-size:13px;line-height:20px;color:#999;">预定数量</div>
<div class="a" style="left:687px;top:192.0px;font-size:14px;line-height:20px;color:#333;">是否显示消费明细</div>
<div class="a" style="left:813px;top:185px;width:223px;height:33px;background:#fff;border:1px solid #d3d3d3;box-sizing:border-box"></div>
<div class="a" style="left:826px;top:191.5px;font-size:13px;line-height:20px;color:#333;">选择</div>
<div class="a" style="left:1020px;top:200px;line-height:0"><svg width="8" height="5" viewBox="0 0 8 5" style=""><path d="M0 0 H8 L4 4.5 Z" fill="#222"/></svg></div>
<div class="a" style="left:1054px;width:140px;text-align:right;top:192.0px;font-size:14px;line-height:20px;color:#333;">消费明细链接</div>
<div class="a" style="left:1223px;top:185px;width:224px;height:33px;background:#fff;border:1px solid #d3d3d3;box-sizing:border-box"></div>
<div class="a" style="left:1236px;top:191.5px;font-size:13px;line-height:20px;color:#999;">消费明细链接</div>
<div class="a" style="left:1485px;width:120px;text-align:right;top:192.0px;font-size:14px;line-height:20px;color:#333;">是否显示VR</div>
<div class="a" style="left:1634px;top:185px;width:224px;height:33px;background:#fff;border:1px solid #d3d3d3;box-sizing:border-box"></div>
<div class="a" style="left:1647px;top:191.5px;font-size:13px;line-height:20px;color:#333;">选择</div>
<div class="a" style="left:1842px;top:200px;line-height:0"><svg width="8" height="5" viewBox="0 0 8 5" style=""><path d="M0 0 H8 L4 4.5 Z" fill="#222"/></svg></div>
<div class="a" style="left:252px;width:120px;text-align:right;top:240.0px;font-size:14px;line-height:20px;color:#333;">VR链接</div>
<div class="a" style="left:402px;top:233px;width:224px;height:33px;background:#fff;border:1px solid #d3d3d3;box-sizing:border-box"></div>
<div class="a" style="left:415px;top:239.5px;font-size:13px;line-height:20px;color:#999;">VR链接</div>
<div class="a" style="left:687px;top:240.0px;font-size:14px;line-height:20px;color:#333;">状态(上架/下架)</div>
<div class="a" style="left:813px;top:233px;width:223px;height:33px;background:#fff;border:1px solid #d3d3d3;box-sizing:border-box"></div>
<div class="a" style="left:826px;top:239.5px;font-size:13px;line-height:20px;color:#333;">选择</div>
<div class="a" style="left:1020px;top:248px;line-height:0"><svg width="8" height="5" viewBox="0 0 8 5" style=""><path d="M0 0 H8 L4 4.5 Z" fill="#222"/></svg></div>
<div class="a" style="left:1223px;top:233px;width:52px;height:33px;background:#18bc9c;border-radius:3px"></div>
<div class="a" style="left:1223.0px;width:52px;text-align:center;top:239.5px;font-size:13px;line-height:20px;color:#fff;font-weight:bold;">提交</div>
<div class="a" style="left:1279px;top:233px;width:52px;height:33px;background:#f4f4f4;border:1px solid #ddd;box-sizing:border-box;border-radius:3px"></div>
<div class="a" style="left:1279.0px;width:52px;text-align:center;top:239.5px;font-size:13px;line-height:20px;color:#333;font-weight:bold;">重置</div>
<div class="a" style="left:260px;top:291px;width:37px;height:33px;background:#444c69;border-radius:3px"></div>
<div class="a" style="left:273px;top:300.5px;line-height:0"><svg width="12" height="11.5" viewBox="0 0 12 11.5" style=""><path d="M1.6 5.4 A4.3 4.3 0 0 1 9.4 3.1" fill="none" stroke="#fff" stroke-width="2"/><path d="M11.7 0.5 V5.3 H6.9 Z" fill="#fff"/><path d="M10.4 6.1 A4.3 4.3 0 0 1 2.6 8.4" fill="none" stroke="#fff" stroke-width="2"/><path d="M0.3 11 V6.2 H5.1 Z" fill="#fff"/></svg></div>
<div class="a" style="left:301px;top:291px;width:66px;height:33px;background:#18bc9c;border-radius:3px"></div>
<div class="a" style="left:301px;top:290px;width:66px;height:33px;display:flex;align-items:center;justify-content:center;color:#fff;font-size:13px;font-weight:bold"><svg width="11" height="11" viewBox="0 0 11 11" style=""><path d="M4 0 H7 V4 H11 V7 H7 V11 H4 V7 H0 V4 H4 Z" fill="#fff"/></svg><span style="margin-left:4px">添加</span></div>
<div class="a" style="left:371px;top:291px;width:67px;height:33px;background:#6fd2be;border-radius:3px"></div>
<div class="a" style="left:371px;top:290px;width:67px;height:33px;display:flex;align-items:center;justify-content:center;color:#fff;font-size:13px;font-weight:bold"><svg width="12" height="11" viewBox="0 0 12 11" style=""><path d="M9 0.3 L11.7 3 L4 10.7 L0.3 11 L0.6 7.3 Z" fill="#fff"/></svg><span style="margin-left:4px">编辑</span></div>
<div class="a" style="left:441px;top:291px;width:66px;height:33px;background:#f9968b;border-radius:3px"></div>
<div class="a" style="left:441px;top:290px;width:66px;height:33px;display:flex;align-items:center;justify-content:center;color:#fff;font-size:13px;font-weight:bold"><svg width="10" height="11" viewBox="0 0 10 11" style=""><rect x="3" y="0" width="4" height="1.6" fill="#fff"/><rect x="0" y="1.2" width="10" height="1.8" fill="#fff"/><path d="M1 3.5 H9 L8.4 11 H1.6 Z" fill="#fff"/></svg><span style="margin-left:4px">删除</span></div>
<div class="a" style="left:511px;top:291px;width:67px;height:33px;background:#7e8499;border-radius:3px"></div>
<div class="a" style="left:511px;top:290px;width:67px;height:33px;display:flex;align-items:center;justify-content:center;color:#fff;font-size:13px;font-weight:bold"><svg width="12" height="12" viewBox="0 0 16 16" style=""><path fill="#fff" fill-rule="evenodd" d="M13.22 6.62 L15.10 6.82 L15.10 9.18 L13.22 9.38 L12.67 10.71 L13.86 12.19 L12.19 13.86 L10.71 12.67 L9.38 13.22 L9.18 15.10 L6.82 15.10 L6.62 13.22 L5.29 12.67 L3.81 13.86 L2.14 12.19 L3.33 10.71 L2.78 9.38 L0.90 9.18 L0.90 6.82 L2.78 6.62 L3.33 5.29 L2.14 3.81 L3.81 2.14 L5.29 3.33 L6.62 2.78 L6.82 0.90 L9.18 0.90 L9.38 2.78 L10.71 3.33 L12.19 2.14 L13.86 3.81 L12.67 5.29 Z M5.60 8.00 a2.40 2.40 0 1 0 4.80 0 a2.40 2.40 0 1 0 -4.80 0 Z"/></svg><span style="margin-left:4px">更多</span></div>
<div class="a" style="left:582px;top:291px;width:81px;height:33px;background:#18bc9c;border-radius:3px"></div>
<div class="a" style="left:582px;top:290px;width:81px;height:33px;display:flex;align-items:center;justify-content:center;color:#fff;font-size:13px;font-weight:bold"><svg width="12" height="12" viewBox="0 0 12 13" style=""><g fill="none" stroke="#fff" stroke-width="2.3" stroke-linejoin="round"><path d="M3.3 5.2 L6 1.2 L8.2 4.6"/><path d="M9.6 6.6 L11 9.6 L10.2 10.8 H7"/><path d="M4.8 10.8 H1.8 L1 9.6 L2.4 7.2"/></g><path d="M9.8 2.6 L9.4 6.4 L6.2 5.2 Z M5.8 8.2 L5.8 12.8 L8.6 10.6 Z M0.6 6.4 L3.8 4.4 L4.8 7.6 Z" fill="#fff"/></svg><span style="margin-left:4px">回收站</span></div>
<div class="a" style="left:1834px;top:291px;width:39px;height:33px;background:#f4f4f4;border:1px solid #ddd;box-sizing:border-box;border-radius:3px"></div>
<div class="a" style="left:1847px;top:299.5px;line-height:0"><svg width="13" height="13" viewBox="0 0 13 13" style=""><circle cx="5.3" cy="5.3" r="4.2" fill="none" stroke="#333" stroke-width="2.2"/><path d="M8.6 8.6 L12 12" stroke="#333" stroke-width="2.6" stroke-linecap="round"/></svg></div>
<div class="a" style="left:260px;top:335px;width:1613px;height:555px;border:1px solid #eeeeee;box-sizing:border-box"></div>
<div class="a" style="left:260px;top:379px;width:1613px;height:1px;background:#e2e2e2"></div>
<div class="a" style="left:305px;top:335px;width:1px;height:555px;background:#f4f4f4"></div>
<div class="a" style="left:381px;top:335px;width:1px;height:555px;background:#f4f4f4"></div>
<div class="a" style="left:548px;top:335px;width:1px;height:555px;background:#f4f4f4"></div>
<div class="a" style="left:694px;top:335px;width:1px;height:555px;background:#f4f4f4"></div>
<div class="a" style="left:783px;top:335px;width:1px;height:555px;background:#f4f4f4"></div>
<div class="a" style="left:883px;top:335px;width:1px;height:555px;background:#f4f4f4"></div>
<div class="a" style="left:976px;top:335px;width:1px;height:555px;background:#f4f4f4"></div>
<div class="a" style="left:1136px;top:335px;width:1px;height:555px;background:#f4f4f4"></div>
<div class="a" style="left:1296px;top:335px;width:1px;height:555px;background:#f4f4f4"></div>
<div class="a" style="left:1456px;top:335px;width:1px;height:555px;background:#f4f4f4"></div>
<div class="a" style="left:1616px;top:335px;width:1px;height:555px;background:#f4f4f4"></div>
<div class="a" style="left:1776px;top:335px;width:1px;height:555px;background:#f4f4f4"></div>
<div class="a" style="left:276.0px;top:348.5px;width:13px;height:13px;border:1px solid #767676;border-radius:2px;box-sizing:border-box;background:#fff"></div>
<div class="a" style="left:305.5px;width:76px;text-align:center;top:347.0px;font-size:14px;line-height:20px;color:#333;font-weight:bold;">封面图</div>
<div class="a" style="left:381.5px;width:167px;text-align:center;top:347.0px;font-size:14px;line-height:20px;color:#333;font-weight:bold;">类型</div>
<div class="a" style="left:548.5px;width:146px;text-align:center;top:347.0px;font-size:14px;line-height:20px;color:#333;font-weight:bold;">名称（房间号）</div>
<div class="a" style="left:694.5px;width:89px;text-align:center;top:347.0px;font-size:14px;line-height:20px;color:#333;font-weight:bold;">定金</div>
<div class="a" style="left:783.5px;width:100px;text-align:center;top:347.0px;font-size:14px;line-height:20px;color:#333;font-weight:bold;">适合人数</div>
<div class="a" style="left:883.5px;width:93px;text-align:center;top:347.0px;font-size:14px;line-height:20px;color:#333;font-weight:bold;">预定数量</div>
<div class="a" style="left:976.5px;width:160px;text-align:center;top:347.0px;font-size:14px;line-height:20px;color:#333;font-weight:bold;">是否显示消费明细</div>
<div class="a" style="left:1136.5px;width:160px;text-align:center;top:347.0px;font-size:14px;line-height:20px;color:#333;font-weight:bold;">消费明细链接</div>
<div class="a" style="left:1296.5px;width:160px;text-align:center;top:347.0px;font-size:14px;line-height:20px;color:#333;font-weight:bold;">是否显示VR</div>
<div class="a" style="left:1456.5px;width:160px;text-align:center;top:347.0px;font-size:14px;line-height:20px;color:#333;font-weight:bold;">VR链接</div>
<div class="a" style="left:1616.5px;width:160px;text-align:center;top:347.0px;font-size:14px;line-height:20px;color:#333;font-weight:bold;">状态(上架/下架)</div>
<div class="a" style="left:1776.5px;width:97px;text-align:center;top:347.0px;font-size:14px;line-height:20px;color:#333;font-weight:bold;">操作</div>
<div class="a" style="left:261px;top:380px;width:1611px;height:51px;background:#f9f9f9"></div>
<div class="a" style="left:276.0px;top:397.0px;width:13px;height:13px;border:1px solid #767676;border-radius:2px;box-sizing:border-box;background:#fff"></div>
<div class="a" style="left:328px;top:389.5px;width:30px;height:30px;overflow:hidden"><div style="position:absolute;left:-3px;top:-3px;width:36px;height:36px;filter:blur(1.1px)"><div style="position:absolute;left:0.0px;top:0.0px;width:7.4px;height:7.4px;background:#201838"></div><div style="position:absolute;left:7.2px;top:0.0px;width:7.4px;height:7.4px;background:#4a5090"></div><div style="position:absolute;left:14.4px;top:0.0px;width:7.4px;height:7.4px;background:#5060a0"></div><div style="position:absolute;left:21.6px;top:0.0px;width:7.4px;height:7.4px;background:#304880"></div><div style="position:absolute;left:28.8px;top:0.0px;width:7.4px;height:7.4px;background:#3a70a0"></div><div style="position:absolute;left:0.0px;top:7.2px;width:7.4px;height:7.4px;background:#402060"></div><div style="position:absolute;left:7.2px;top:7.2px;width:7.4px;height:7.4px;background:#7a50b0"></div><div style="position:absolute;left:14.4px;top:7.2px;width:7.4px;height:7.4px;background:#5a3a90"></div><div style="position:absolute;left:21.6px;top:7.2px;width:7.4px;height:7.4px;background:#3a6a60"></div><div style="position:absolute;left:28.8px;top:7.2px;width:7.4px;height:7.4px;background:#30c040"></div><div style="position:absolute;left:0.0px;top:14.4px;width:7.4px;height:7.4px;background:#7a2a90"></div><div style="position:absolute;left:7.2px;top:14.4px;width:7.4px;height:7.4px;background:#8a40a0"></div><div style="position:absolute;left:14.4px;top:14.4px;width:7.4px;height:7.4px;background:#6a4a90"></div><div style="position:absolute;left:21.6px;top:14.4px;width:7.4px;height:7.4px;background:#405a50"></div><div style="position:absolute;left:28.8px;top:14.4px;width:7.4px;height:7.4px;background:#20a040"></div><div style="position:absolute;left:0.0px;top:21.6px;width:7.4px;height:7.4px;background:#c04a30"></div><div style="position:absolute;left:7.2px;top:21.6px;width:7.4px;height:7.4px;background:#c06a50"></div><div style="position:absolute;left:14.4px;top:21.6px;width:7.4px;height:7.4px;background:#a05a50"></div><div style="position:absolute;left:21.6px;top:21.6px;width:7.4px;height:7.4px;background:#305040"></div><div style="position:absolute;left:28.8px;top:21.6px;width:7.4px;height:7.4px;background:#204030"></div><div style="position:absolute;left:0.0px;top:28.8px;width:7.4px;height:7.4px;background:#a03a2a"></div><div style="position:absolute;left:7.2px;top:28.8px;width:7.4px;height:7.4px;background:#402a40"></div><div style="position:absolute;left:14.4px;top:28.8px;width:7.4px;height:7.4px;background:#303050"></div><div style="position:absolute;left:21.6px;top:28.8px;width:7.4px;height:7.4px;background:#303050"></div><div style="position:absolute;left:28.8px;top:28.8px;width:7.4px;height:7.4px;background:#202040"></div></div></div>
<div class="a" style="left:381.5px;width:167px;text-align:center;top:394.5px;font-size:14px;line-height:20px;color:#3d8ee0;">豪华小包</div>
<div class="a" style="left:548.5px;width:146px;text-align:center;top:394.5px;font-size:14px;line-height:20px;color:#333;">103</div>
<div class="a" style="left:694.5px;width:89px;text-align:center;top:394.5px;font-size:14px;line-height:20px;color:#333;">200.00</div>
<div class="a" style="left:783.5px;width:100px;text-align:center;top:394.5px;font-size:14px;line-height:20px;color:#3d8ee0;">4-8人</div>
<div class="a" style="left:883.5px;width:93px;text-align:center;top:394.5px;font-size:14px;line-height:20px;color:#333;">0</div>
<div class="a" style="left:1042.0px;top:394.0px;width:30px;height:19px;background:#d2d6de;border-radius:10px"></div>
<div class="a" style="left:1044.0px;top:396.0px;width:15px;height:15px;background:#fff;border-radius:50%"></div>
<div class="a" style="left:1136.5px;width:160px;text-align:center;top:394.5px;font-size:14px;line-height:20px;color:#777;">未配置</div>
<div class="a" style="left:1362.0px;top:394.0px;width:30px;height:19px;background:#d2d6de;border-radius:10px"></div>
<div class="a" style="left:1364.0px;top:396.0px;width:15px;height:15px;background:#fff;border-radius:50%"></div>
<div class="a" style="left:1456.5px;width:160px;text-align:center;top:394.5px;font-size:14px;line-height:20px;color:#777;">未配置</div>
<div class="a" style="left:1682.0px;top:394.0px;width:30px;height:19px;background:#18bc9c;border-radius:10px"></div>
<div class="a" style="left:1695.0px;top:396.0px;width:15px;height:15px;background:#fff;border-radius:50%"></div>
<div class="a" style="left:1801px;top:393.5px;width:22px;height:22px;background:#18bc9c;border-radius:2px"></div>
<div class="a" style="left:1806.5px;top:398.5px;line-height:0"><svg width="11" height="11" viewBox="0 0 11 11" style=""><path d="M2.4 8.6 L8.6 2.4" stroke="#fff" stroke-width="3.3" stroke-linecap="round"/></svg></div>
<div class="a" style="left:1827px;top:393.5px;width:21px;height:22px;background:#f75444;border-radius:2px"></div>
<div class="a" style="left:1832.5px;top:399.0px;line-height:0"><svg width="10" height="10.5" viewBox="0 0 10 10" style=""><rect x="3" y="0" width="4" height="1.4" fill="#fff"/><rect x="0" y="1.1" width="10" height="1.7" fill="#fff"/><path d="M1 3.2 H9 L8.5 10.5 H1.5 Z" fill="#fff"/><rect x="3.3" y="4.3" width="0.9" height="5" fill="#f75444"/><rect x="5.8" y="4.3" width="0.9" height="5" fill="#f75444"/></svg></div>
<div class="a" style="left:261px;top:431px;width:1611px;height:1px;background:#f7f7f7"></div>
<div class="a" style="left:276.0px;top:448.0px;width:13px;height:13px;border:1px solid #767676;border-radius:2px;box-sizing:border-box;background:#fff"></div>
<div class="a" style="left:328px;top:440.5px;width:30px;height:30px;overflow:hidden"><div style="position:absolute;left:-3px;top:-3px;width:36px;height:36px;filter:blur(1.1px)"><div style="position:absolute;left:0.0px;top:0.0px;width:7.4px;height:7.4px;background:#2a2018"></div><div style="position:absolute;left:7.2px;top:0.0px;width:7.4px;height:7.4px;background:#5a4028"></div><div style="position:absolute;left:14.4px;top:0.0px;width:7.4px;height:7.4px;background:#3a3020"></div><div style="position:absolute;left:21.6px;top:0.0px;width:7.4px;height:7.4px;background:#6a5838"></div><div style="position:absolute;left:28.8px;top:0.0px;width:7.4px;height:7.4px;background:#2a2418"></div><div style="position:absolute;left:0.0px;top:7.2px;width:7.4px;height:7.4px;background:#1e1814"></div><div style="position:absolute;left:7.2px;top:7.2px;width:7.4px;height:7.4px;background:#6a5030"></div><div style="position:absolute;left:14.4px;top:7.2px;width:7.4px;height:7.4px;background:#2a3a3a"></div><div style="position:absolute;left:21.6px;top:7.2px;width:7.4px;height:7.4px;background:#8a6a40"></div><div style="position:absolute;left:28.8px;top:7.2px;width:7.4px;height:7.4px;background:#3a3020"></div><div style="position:absolute;left:0.0px;top:14.4px;width:7.4px;height:7.4px;background:#4a3018"></div><div style="position:absolute;left:7.2px;top:14.4px;width:7.4px;height:7.4px;background:#8a6030"></div><div style="position:absolute;left:14.4px;top:14.4px;width:7.4px;height:7.4px;background:#5a4020"></div><div style="position:absolute;left:21.6px;top:14.4px;width:7.4px;height:7.4px;background:#6a4a28"></div><div style="position:absolute;left:28.8px;top:14.4px;width:7.4px;height:7.4px;background:#5a4a30"></div><div style="position:absolute;left:0.0px;top:21.6px;width:7.4px;height:7.4px;background:#1e140c"></div><div style="position:absolute;left:7.2px;top:21.6px;width:7.4px;height:7.4px;background:#3a2814"></div><div style="position:absolute;left:14.4px;top:21.6px;width:7.4px;height:7.4px;background:#4a3018"></div><div style="position:absolute;left:21.6px;top:21.6px;width:7.4px;height:7.4px;background:#3a2814"></div><div style="position:absolute;left:28.8px;top:21.6px;width:7.4px;height:7.4px;background:#201810"></div><div style="position:absolute;left:0.0px;top:28.8px;width:7.4px;height:7.4px;background:#120e0a"></div><div style="position:absolute;left:7.2px;top:28.8px;width:7.4px;height:7.4px;background:#18120c"></div><div style="position:absolute;left:14.4px;top:28.8px;width:7.4px;height:7.4px;background:#1a140e"></div><div style="position:absolute;left:21.6px;top:28.8px;width:7.4px;height:7.4px;background:#18120c"></div><div style="position:absolute;left:28.8px;top:28.8px;width:7.4px;height:7.4px;background:#120e0a"></div></div></div>
<div class="a" style="left:381.5px;width:167px;text-align:center;top:445.5px;font-size:14px;line-height:20px;color:#3d8ee0;">豪华大包</div>
<div class="a" style="left:548.5px;width:146px;text-align:center;top:445.5px;font-size:14px;line-height:20px;color:#333;">101</div>
<div class="a" style="left:694.5px;width:89px;text-align:center;top:445.5px;font-size:14px;line-height:20px;color:#333;">500.00</div>
<div class="a" style="left:783.5px;width:100px;text-align:center;top:445.5px;font-size:14px;line-height:20px;color:#3d8ee0;">16-24人</div>
<div class="a" style="left:883.5px;width:93px;text-align:center;top:445.5px;font-size:14px;line-height:20px;color:#333;">0</div>
<div class="a" style="left:1042.0px;top:445.0px;width:30px;height:19px;background:#d2d6de;border-radius:10px"></div>
<div class="a" style="left:1044.0px;top:447.0px;width:15px;height:15px;background:#fff;border-radius:50%"></div>
<div class="a" style="left:1136.5px;width:160px;text-align:center;top:445.5px;font-size:14px;line-height:20px;color:#777;">未配置</div>
<div class="a" style="left:1362.0px;top:445.0px;width:30px;height:19px;background:#d2d6de;border-radius:10px"></div>
<div class="a" style="left:1364.0px;top:447.0px;width:15px;height:15px;background:#fff;border-radius:50%"></div>
<div class="a" style="left:1456.5px;width:160px;text-align:center;top:445.5px;font-size:14px;line-height:20px;color:#777;">未配置</div>
<div class="a" style="left:1682.0px;top:445.0px;width:30px;height:19px;background:#18bc9c;border-radius:10px"></div>
<div class="a" style="left:1695.0px;top:447.0px;width:15px;height:15px;background:#fff;border-radius:50%"></div>
<div class="a" style="left:1801px;top:444.5px;width:22px;height:22px;background:#18bc9c;border-radius:2px"></div>
<div class="a" style="left:1806.5px;top:449.5px;line-height:0"><svg width="11" height="11" viewBox="0 0 11 11" style=""><path d="M2.4 8.6 L8.6 2.4" stroke="#fff" stroke-width="3.3" stroke-linecap="round"/></svg></div>
<div class="a" style="left:1827px;top:444.5px;width:21px;height:22px;background:#f75444;border-radius:2px"></div>
<div class="a" style="left:1832.5px;top:450.0px;line-height:0"><svg width="10" height="10.5" viewBox="0 0 10 10" style=""><rect x="3" y="0" width="4" height="1.4" fill="#fff"/><rect x="0" y="1.1" width="10" height="1.7" fill="#fff"/><path d="M1 3.2 H9 L8.5 10.5 H1.5 Z" fill="#fff"/><rect x="3.3" y="4.3" width="0.9" height="5" fill="#f75444"/><rect x="5.8" y="4.3" width="0.9" height="5" fill="#f75444"/></svg></div>
<div class="a" style="left:261px;top:482px;width:1611px;height:51px;background:#f9f9f9"></div>
<div class="a" style="left:261px;top:482px;width:1611px;height:1px;background:#f7f7f7"></div>
<div class="a" style="left:276.0px;top:499.0px;width:13px;height:13px;border:1px solid #767676;border-radius:2px;box-sizing:border-box;background:#fff"></div>
<div class="a" style="left:328px;top:491.5px;width:30px;height:30px;overflow:hidden"><div style="position:absolute;left:-3px;top:-3px;width:36px;height:36px;filter:blur(1.1px)"><div style="position:absolute;left:0.0px;top:0.0px;width:7.4px;height:7.4px;background:#5a6ab8"></div><div style="position:absolute;left:7.2px;top:0.0px;width:7.4px;height:7.4px;background:#3a48a0"></div><div style="position:absolute;left:14.4px;top:0.0px;width:7.4px;height:7.4px;background:#6878c8"></div><div style="position:absolute;left:21.6px;top:0.0px;width:7.4px;height:7.4px;background:#3a48a0"></div><div style="position:absolute;left:28.8px;top:0.0px;width:7.4px;height:7.4px;background:#5a6ab8"></div><div style="position:absolute;left:0.0px;top:7.2px;width:7.4px;height:7.4px;background:#7a88d0"></div><div style="position:absolute;left:7.2px;top:7.2px;width:7.4px;height:7.4px;background:#303c90"></div><div style="position:absolute;left:14.4px;top:7.2px;width:7.4px;height:7.4px;background:#a8b0e0"></div><div style="position:absolute;left:21.6px;top:7.2px;width:7.4px;height:7.4px;background:#303c90"></div><div style="position:absolute;left:28.8px;top:7.2px;width:7.4px;height:7.4px;background:#7a88d0"></div><div style="position:absolute;left:0.0px;top:14.4px;width:7.4px;height:7.4px;background:#98a8e0"></div><div style="position:absolute;left:7.2px;top:14.4px;width:7.4px;height:7.4px;background:#5060b0"></div><div style="position:absolute;left:14.4px;top:14.4px;width:7.4px;height:7.4px;background:#d8d8e8"></div><div style="position:absolute;left:21.6px;top:14.4px;width:7.4px;height:7.4px;background:#5060b0"></div><div style="position:absolute;left:28.8px;top:14.4px;width:7.4px;height:7.4px;background:#98a8e0"></div><div style="position:absolute;left:0.0px;top:21.6px;width:7.4px;height:7.4px;background:#7080c8"></div><div style="position:absolute;left:7.2px;top:21.6px;width:7.4px;height:7.4px;background:#3a4aa0"></div><div style="position:absolute;left:14.4px;top:21.6px;width:7.4px;height:7.4px;background:#6070c0"></div><div style="position:absolute;left:21.6px;top:21.6px;width:7.4px;height:7.4px;background:#3a4aa0"></div><div style="position:absolute;left:28.8px;top:21.6px;width:7.4px;height:7.4px;background:#7080c8"></div><div style="position:absolute;left:0.0px;top:28.8px;width:7.4px;height:7.4px;background:#5a70c0"></div><div style="position:absolute;left:7.2px;top:28.8px;width:7.4px;height:7.4px;background:#8a98d8"></div><div style="position:absolute;left:14.4px;top:28.8px;width:7.4px;height:7.4px;background:#4a58b0"></div><div style="position:absolute;left:21.6px;top:28.8px;width:7.4px;height:7.4px;background:#8a98d8"></div><div style="position:absolute;left:28.8px;top:28.8px;width:7.4px;height:7.4px;background:#5a70c0"></div></div></div>
<div class="a" style="left:381.5px;width:167px;text-align:center;top:496.5px;font-size:14px;line-height:20px;color:#3d8ee0;">5D6D全境派对房</div>
<div class="a" style="left:548.5px;width:146px;text-align:center;top:496.5px;font-size:14px;line-height:20px;color:#333;">666</div>
<div class="a" style="left:694.5px;width:89px;text-align:center;top:496.5px;font-size:14px;line-height:20px;color:#333;">500.00</div>
<div class="a" style="left:783.5px;width:100px;text-align:center;top:496.5px;font-size:14px;line-height:20px;color:#3d8ee0;">14-20人</div>
<div class="a" style="left:883.5px;width:93px;text-align:center;top:496.5px;font-size:14px;line-height:20px;color:#333;">0</div>
<div class="a" style="left:1042.0px;top:496.0px;width:30px;height:19px;background:#d2d6de;border-radius:10px"></div>
<div class="a" style="left:1044.0px;top:498.0px;width:15px;height:15px;background:#fff;border-radius:50%"></div>
<div class="a" style="left:1136.5px;width:160px;text-align:center;top:496.5px;font-size:14px;line-height:20px;color:#777;">未配置</div>
<div class="a" style="left:1362.0px;top:496.0px;width:30px;height:19px;background:#d2d6de;border-radius:10px"></div>
<div class="a" style="left:1364.0px;top:498.0px;width:15px;height:15px;background:#fff;border-radius:50%"></div>
<div class="a" style="left:1456.5px;width:160px;text-align:center;top:496.5px;font-size:14px;line-height:20px;color:#777;">未配置</div>
<div class="a" style="left:1682.0px;top:496.0px;width:30px;height:19px;background:#d2d6de;border-radius:10px"></div>
<div class="a" style="left:1684.0px;top:498.0px;width:15px;height:15px;background:#fff;border-radius:50%"></div>
<div class="a" style="left:1801px;top:495.5px;width:22px;height:22px;background:#18bc9c;border-radius:2px"></div>
<div class="a" style="left:1806.5px;top:500.5px;line-height:0"><svg width="11" height="11" viewBox="0 0 11 11" style=""><path d="M2.4 8.6 L8.6 2.4" stroke="#fff" stroke-width="3.3" stroke-linecap="round"/></svg></div>
<div class="a" style="left:1827px;top:495.5px;width:21px;height:22px;background:#f75444;border-radius:2px"></div>
<div class="a" style="left:1832.5px;top:501.0px;line-height:0"><svg width="10" height="10.5" viewBox="0 0 10 10" style=""><rect x="3" y="0" width="4" height="1.4" fill="#fff"/><rect x="0" y="1.1" width="10" height="1.7" fill="#fff"/><path d="M1 3.2 H9 L8.5 10.5 H1.5 Z" fill="#fff"/><rect x="3.3" y="4.3" width="0.9" height="5" fill="#f75444"/><rect x="5.8" y="4.3" width="0.9" height="5" fill="#f75444"/></svg></div>
<div class="a" style="left:261px;top:533px;width:1611px;height:1px;background:#f7f7f7"></div>
<div class="a" style="left:276.0px;top:550.0px;width:13px;height:13px;border:1px solid #767676;border-radius:2px;box-sizing:border-box;background:#fff"></div>
<div class="a" style="left:328px;top:542.5px;width:30px;height:30px;overflow:hidden"><div style="position:absolute;left:-3px;top:-3px;width:36px;height:36px;filter:blur(1.1px)"><div style="position:absolute;left:0.0px;top:0.0px;width:7.4px;height:7.4px;background:#5a0a6a"></div><div style="position:absolute;left:7.2px;top:0.0px;width:7.4px;height:7.4px;background:#c050d0"></div><div style="position:absolute;left:14.4px;top:0.0px;width:7.4px;height:7.4px;background:#6a1a80"></div><div style="position:absolute;left:21.6px;top:0.0px;width:7.4px;height:7.4px;background:#c050d0"></div><div style="position:absolute;left:28.8px;top:0.0px;width:7.4px;height:7.4px;background:#5a0a6a"></div><div style="position:absolute;left:0.0px;top:7.2px;width:7.4px;height:7.4px;background:#7a1a8a"></div><div style="position:absolute;left:7.2px;top:7.2px;width:7.4px;height:7.4px;background:#d060e0"></div><div style="position:absolute;left:14.4px;top:7.2px;width:7.4px;height:7.4px;background:#8a2aa0"></div><div style="position:absolute;left:21.6px;top:7.2px;width:7.4px;height:7.4px;background:#d060e0"></div><div style="position:absolute;left:28.8px;top:7.2px;width:7.4px;height:7.4px;background:#7a1a8a"></div><div style="position:absolute;left:0.0px;top:14.4px;width:7.4px;height:7.4px;background:#6a1080"></div><div style="position:absolute;left:7.2px;top:14.4px;width:7.4px;height:7.4px;background:#b040c0"></div><div style="position:absolute;left:14.4px;top:14.4px;width:7.4px;height:7.4px;background:#7a2090"></div><div style="position:absolute;left:21.6px;top:14.4px;width:7.4px;height:7.4px;background:#b040c0"></div><div style="position:absolute;left:28.8px;top:14.4px;width:7.4px;height:7.4px;background:#6a1080"></div><div style="position:absolute;left:0.0px;top:21.6px;width:7.4px;height:7.4px;background:#4a0860"></div><div style="position:absolute;left:7.2px;top:21.6px;width:7.4px;height:7.4px;background:#7a2090"></div><div style="position:absolute;left:14.4px;top:21.6px;width:7.4px;height:7.4px;background:#a040c0"></div><div style="position:absolute;left:21.6px;top:21.6px;width:7.4px;height:7.4px;background:#7a2090"></div><div style="position:absolute;left:28.8px;top:21.6px;width:7.4px;height:7.4px;background:#4a0860"></div><div style="position:absolute;left:0.0px;top:28.8px;width:7.4px;height:7.4px;background:#2a0638"></div><div style="position:absolute;left:7.2px;top:28.8px;width:7.4px;height:7.4px;background:#7a2890"></div><div style="position:absolute;left:14.4px;top:28.8px;width:7.4px;height:7.4px;background:#e070f0"></div><div style="position:absolute;left:21.6px;top:28.8px;width:7.4px;height:7.4px;background:#7a2890"></div><div style="position:absolute;left:28.8px;top:28.8px;width:7.4px;height:7.4px;background:#2a0638"></div></div></div>
<div class="a" style="left:381.5px;width:167px;text-align:center;top:547.5px;font-size:14px;line-height:20px;color:#3d8ee0;">电音派对房</div>
<div class="a" style="left:548.5px;width:146px;text-align:center;top:547.5px;font-size:14px;line-height:20px;color:#333;">202</div>
<div class="a" style="left:694.5px;width:89px;text-align:center;top:547.5px;font-size:14px;line-height:20px;color:#333;">500.00</div>
<div class="a" style="left:783.5px;width:100px;text-align:center;top:547.5px;font-size:14px;line-height:20px;color:#3d8ee0;">16-24人</div>
<div class="a" style="left:883.5px;width:93px;text-align:center;top:547.5px;font-size:14px;line-height:20px;color:#333;">0</div>
<div class="a" style="left:1042.0px;top:547.0px;width:30px;height:19px;background:#d2d6de;border-radius:10px"></div>
<div class="a" style="left:1044.0px;top:549.0px;width:15px;height:15px;background:#fff;border-radius:50%"></div>
<div class="a" style="left:1136.5px;width:160px;text-align:center;top:547.5px;font-size:14px;line-height:20px;color:#777;">未配置</div>
<div class="a" style="left:1362.0px;top:547.0px;width:30px;height:19px;background:#d2d6de;border-radius:10px"></div>
<div class="a" style="left:1364.0px;top:549.0px;width:15px;height:15px;background:#fff;border-radius:50%"></div>
<div class="a" style="left:1456.5px;width:160px;text-align:center;top:547.5px;font-size:14px;line-height:20px;color:#777;">未配置</div>
<div class="a" style="left:1682.0px;top:547.0px;width:30px;height:19px;background:#18bc9c;border-radius:10px"></div>
<div class="a" style="left:1695.0px;top:549.0px;width:15px;height:15px;background:#fff;border-radius:50%"></div>
<div class="a" style="left:1801px;top:546.5px;width:22px;height:22px;background:#18bc9c;border-radius:2px"></div>
<div class="a" style="left:1806.5px;top:551.5px;line-height:0"><svg width="11" height="11" viewBox="0 0 11 11" style=""><path d="M2.4 8.6 L8.6 2.4" stroke="#fff" stroke-width="3.3" stroke-linecap="round"/></svg></div>
<div class="a" style="left:1827px;top:546.5px;width:21px;height:22px;background:#f75444;border-radius:2px"></div>
<div class="a" style="left:1832.5px;top:552.0px;line-height:0"><svg width="10" height="10.5" viewBox="0 0 10 10" style=""><rect x="3" y="0" width="4" height="1.4" fill="#fff"/><rect x="0" y="1.1" width="10" height="1.7" fill="#fff"/><path d="M1 3.2 H9 L8.5 10.5 H1.5 Z" fill="#fff"/><rect x="3.3" y="4.3" width="0.9" height="5" fill="#f75444"/><rect x="5.8" y="4.3" width="0.9" height="5" fill="#f75444"/></svg></div>
<div class="a" style="left:261px;top:584px;width:1611px;height:51px;background:#f9f9f9"></div>
<div class="a" style="left:261px;top:584px;width:1611px;height:1px;background:#f7f7f7"></div>
<div class="a" style="left:276.0px;top:601.0px;width:13px;height:13px;border:1px solid #767676;border-radius:2px;box-sizing:border-box;background:#fff"></div>
<div class="a" style="left:328px;top:593.5px;width:30px;height:30px;overflow:hidden"><div style="position:absolute;left:-3px;top:-3px;width:36px;height:36px;filter:blur(1.1px)"><div style="position:absolute;left:0.0px;top:0.0px;width:7.4px;height:7.4px;background:#2a1a6a"></div><div style="position:absolute;left:7.2px;top:0.0px;width:7.4px;height:7.4px;background:#5a2a9a"></div><div style="position:absolute;left:14.4px;top:0.0px;width:7.4px;height:7.4px;background:#7a3aa0"></div><div style="position:absolute;left:21.6px;top:0.0px;width:7.4px;height:7.4px;background:#5a2a9a"></div><div style="position:absolute;left:28.8px;top:0.0px;width:7.4px;height:7.4px;background:#2a1a6a"></div><div style="position:absolute;left:0.0px;top:7.2px;width:7.4px;height:7.4px;background:#3a1a8a"></div><div style="position:absolute;left:7.2px;top:7.2px;width:7.4px;height:7.4px;background:#6a3ab0"></div><div style="position:absolute;left:14.4px;top:7.2px;width:7.4px;height:7.4px;background:#4a60d0"></div><div style="position:absolute;left:21.6px;top:7.2px;width:7.4px;height:7.4px;background:#6a3ab0"></div><div style="position:absolute;left:28.8px;top:7.2px;width:7.4px;height:7.4px;background:#3a1a8a"></div><div style="position:absolute;left:0.0px;top:14.4px;width:7.4px;height:7.4px;background:#a02a6a"></div><div style="position:absolute;left:7.2px;top:14.4px;width:7.4px;height:7.4px;background:#5a3ab0"></div><div style="position:absolute;left:14.4px;top:14.4px;width:7.4px;height:7.4px;background:#6a80e0"></div><div style="position:absolute;left:21.6px;top:14.4px;width:7.4px;height:7.4px;background:#5a3ab0"></div><div style="position:absolute;left:28.8px;top:14.4px;width:7.4px;height:7.4px;background:#a02a6a"></div><div style="position:absolute;left:0.0px;top:21.6px;width:7.4px;height:7.4px;background:#3a1a8a"></div><div style="position:absolute;left:7.2px;top:21.6px;width:7.4px;height:7.4px;background:#6a3ab0"></div><div style="position:absolute;left:14.4px;top:21.6px;width:7.4px;height:7.4px;background:#8a6ac0"></div><div style="position:absolute;left:21.6px;top:21.6px;width:7.4px;height:7.4px;background:#6a3ab0"></div><div style="position:absolute;left:28.8px;top:21.6px;width:7.4px;height:7.4px;background:#3a1a8a"></div><div style="position:absolute;left:0.0px;top:28.8px;width:7.4px;height:7.4px;background:#1a0a5a"></div><div style="position:absolute;left:7.2px;top:28.8px;width:7.4px;height:7.4px;background:#5a3a9a"></div><div style="position:absolute;left:14.4px;top:28.8px;width:7.4px;height:7.4px;background:#c0a0d0"></div><div style="position:absolute;left:21.6px;top:28.8px;width:7.4px;height:7.4px;background:#5a3a9a"></div><div style="position:absolute;left:28.8px;top:28.8px;width:7.4px;height:7.4px;background:#1a0a5a"></div></div></div>
<div class="a" style="left:381.5px;width:167px;text-align:center;top:598.5px;font-size:14px;line-height:20px;color:#3d8ee0;">豪华中包</div>
<div class="a" style="left:548.5px;width:146px;text-align:center;top:598.5px;font-size:14px;line-height:20px;color:#333;">105</div>
<div class="a" style="left:694.5px;width:89px;text-align:center;top:598.5px;font-size:14px;line-height:20px;color:#333;">500.00</div>
<div class="a" style="left:783.5px;width:100px;text-align:center;top:598.5px;font-size:14px;line-height:20px;color:#3d8ee0;">14-20人</div>
<div class="a" style="left:883.5px;width:93px;text-align:center;top:598.5px;font-size:14px;line-height:20px;color:#333;">0</div>
<div class="a" style="left:1042.0px;top:598.0px;width:30px;height:19px;background:#d2d6de;border-radius:10px"></div>
<div class="a" style="left:1044.0px;top:600.0px;width:15px;height:15px;background:#fff;border-radius:50%"></div>
<div class="a" style="left:1136.5px;width:160px;text-align:center;top:598.5px;font-size:14px;line-height:20px;color:#777;">未配置</div>
<div class="a" style="left:1362.0px;top:598.0px;width:30px;height:19px;background:#d2d6de;border-radius:10px"></div>
<div class="a" style="left:1364.0px;top:600.0px;width:15px;height:15px;background:#fff;border-radius:50%"></div>
<div class="a" style="left:1456.5px;width:160px;text-align:center;top:598.5px;font-size:14px;line-height:20px;color:#777;">未配置</div>
<div class="a" style="left:1682.0px;top:598.0px;width:30px;height:19px;background:#18bc9c;border-radius:10px"></div>
<div class="a" style="left:1695.0px;top:600.0px;width:15px;height:15px;background:#fff;border-radius:50%"></div>
<div class="a" style="left:1801px;top:597.5px;width:22px;height:22px;background:#18bc9c;border-radius:2px"></div>
<div class="a" style="left:1806.5px;top:602.5px;line-height:0"><svg width="11" height="11" viewBox="0 0 11 11" style=""><path d="M2.4 8.6 L8.6 2.4" stroke="#fff" stroke-width="3.3" stroke-linecap="round"/></svg></div>
<div class="a" style="left:1827px;top:597.5px;width:21px;height:22px;background:#f75444;border-radius:2px"></div>
<div class="a" style="left:1832.5px;top:603.0px;line-height:0"><svg width="10" height="10.5" viewBox="0 0 10 10" style=""><rect x="3" y="0" width="4" height="1.4" fill="#fff"/><rect x="0" y="1.1" width="10" height="1.7" fill="#fff"/><path d="M1 3.2 H9 L8.5 10.5 H1.5 Z" fill="#fff"/><rect x="3.3" y="4.3" width="0.9" height="5" fill="#f75444"/><rect x="5.8" y="4.3" width="0.9" height="5" fill="#f75444"/></svg></div>
<div class="a" style="left:261px;top:635px;width:1611px;height:1px;background:#f7f7f7"></div>
<div class="a" style="left:276.0px;top:652.0px;width:13px;height:13px;border:1px solid #767676;border-radius:2px;box-sizing:border-box;background:#fff"></div>
<div class="a" style="left:328px;top:644.5px;width:30px;height:30px;overflow:hidden"><div style="position:absolute;left:-3px;top:-3px;width:36px;height:36px;filter:blur(1.1px)"><div style="position:absolute;left:0.0px;top:0.0px;width:7.4px;height:7.4px;background:#201838"></div><div style="position:absolute;left:7.2px;top:0.0px;width:7.4px;height:7.4px;background:#4a5090"></div><div style="position:absolute;left:14.4px;top:0.0px;width:7.4px;height:7.4px;background:#5060a0"></div><div style="position:absolute;left:21.6px;top:0.0px;width:7.4px;height:7.4px;background:#304880"></div><div style="position:absolute;left:28.8px;top:0.0px;width:7.4px;height:7.4px;background:#3a70a0"></div><div style="position:absolute;left:0.0px;top:7.2px;width:7.4px;height:7.4px;background:#402060"></div><div style="position:absolute;left:7.2px;top:7.2px;width:7.4px;height:7.4px;background:#7a50b0"></div><div style="position:absolute;left:14.4px;top:7.2px;width:7.4px;height:7.4px;background:#5a3a90"></div><div style="position:absolute;left:21.6px;top:7.2px;width:7.4px;height:7.4px;background:#3a6a60"></div><div style="position:absolute;left:28.8px;top:7.2px;width:7.4px;height:7.4px;background:#30c040"></div><div style="position:absolute;left:0.0px;top:14.4px;width:7.4px;height:7.4px;background:#7a2a90"></div><div style="position:absolute;left:7.2px;top:14.4px;width:7.4px;height:7.4px;background:#8a40a0"></div><div style="position:absolute;left:14.4px;top:14.4px;width:7.4px;height:7.4px;background:#6a4a90"></div><div style="position:absolute;left:21.6px;top:14.4px;width:7.4px;height:7.4px;background:#405a50"></div><div style="position:absolute;left:28.8px;top:14.4px;width:7.4px;height:7.4px;background:#20a040"></div><div style="position:absolute;left:0.0px;top:21.6px;width:7.4px;height:7.4px;background:#c04a30"></div><div style="position:absolute;left:7.2px;top:21.6px;width:7.4px;height:7.4px;background:#c06a50"></div><div style="position:absolute;left:14.4px;top:21.6px;width:7.4px;height:7.4px;background:#a05a50"></div><div style="position:absolute;left:21.6px;top:21.6px;width:7.4px;height:7.4px;background:#305040"></div><div style="position:absolute;left:28.8px;top:21.6px;width:7.4px;height:7.4px;background:#204030"></div><div style="position:absolute;left:0.0px;top:28.8px;width:7.4px;height:7.4px;background:#a03a2a"></div><div style="position:absolute;left:7.2px;top:28.8px;width:7.4px;height:7.4px;background:#402a40"></div><div style="position:absolute;left:14.4px;top:28.8px;width:7.4px;height:7.4px;background:#303050"></div><div style="position:absolute;left:21.6px;top:28.8px;width:7.4px;height:7.4px;background:#303050"></div><div style="position:absolute;left:28.8px;top:28.8px;width:7.4px;height:7.4px;background:#202040"></div></div></div>
<div class="a" style="left:381.5px;width:167px;text-align:center;top:649.5px;font-size:14px;line-height:20px;color:#3d8ee0;">豪华小包</div>
<div class="a" style="left:548.5px;width:146px;text-align:center;top:649.5px;font-size:14px;line-height:20px;color:#333;">102</div>
<div class="a" style="left:694.5px;width:89px;text-align:center;top:649.5px;font-size:14px;line-height:20px;color:#333;">200.00</div>
<div class="a" style="left:783.5px;width:100px;text-align:center;top:649.5px;font-size:14px;line-height:20px;color:#3d8ee0;">4-8人</div>
<div class="a" style="left:883.5px;width:93px;text-align:center;top:649.5px;font-size:14px;line-height:20px;color:#333;">0</div>
<div class="a" style="left:1042.0px;top:649.0px;width:30px;height:19px;background:#d2d6de;border-radius:10px"></div>
<div class="a" style="left:1044.0px;top:651.0px;width:15px;height:15px;background:#fff;border-radius:50%"></div>
<div class="a" style="left:1136.5px;width:160px;text-align:center;top:649.5px;font-size:14px;line-height:20px;color:#777;">未配置</div>
<div class="a" style="left:1362.0px;top:649.0px;width:30px;height:19px;background:#d2d6de;border-radius:10px"></div>
<div class="a" style="left:1364.0px;top:651.0px;width:15px;height:15px;background:#fff;border-radius:50%"></div>
<div class="a" style="left:1456.5px;width:160px;text-align:center;top:649.5px;font-size:14px;line-height:20px;color:#777;">未配置</div>
<div class="a" style="left:1682.0px;top:649.0px;width:30px;height:19px;background:#d2d6de;border-radius:10px"></div>
<div class="a" style="left:1684.0px;top:651.0px;width:15px;height:15px;background:#fff;border-radius:50%"></div>
<div class="a" style="left:1801px;top:648.5px;width:22px;height:22px;background:#18bc9c;border-radius:2px"></div>
<div class="a" style="left:1806.5px;top:653.5px;line-height:0"><svg width="11" height="11" viewBox="0 0 11 11" style=""><path d="M2.4 8.6 L8.6 2.4" stroke="#fff" stroke-width="3.3" stroke-linecap="round"/></svg></div>
<div class="a" style="left:1827px;top:648.5px;width:21px;height:22px;background:#f75444;border-radius:2px"></div>
<div class="a" style="left:1832.5px;top:654.0px;line-height:0"><svg width="10" height="10.5" viewBox="0 0 10 10" style=""><rect x="3" y="0" width="4" height="1.4" fill="#fff"/><rect x="0" y="1.1" width="10" height="1.7" fill="#fff"/><path d="M1 3.2 H9 L8.5 10.5 H1.5 Z" fill="#fff"/><rect x="3.3" y="4.3" width="0.9" height="5" fill="#f75444"/><rect x="5.8" y="4.3" width="0.9" height="5" fill="#f75444"/></svg></div>
<div class="a" style="left:261px;top:686px;width:1611px;height:51px;background:#f9f9f9"></div>
<div class="a" style="left:261px;top:686px;width:1611px;height:1px;background:#f7f7f7"></div>
<div class="a" style="left:276.0px;top:703.0px;width:13px;height:13px;border:1px solid #767676;border-radius:2px;box-sizing:border-box;background:#fff"></div>
<div class="a" style="left:328px;top:695.5px;width:30px;height:30px;overflow:hidden"><div style="position:absolute;left:-3px;top:-3px;width:36px;height:36px;filter:blur(1.1px)"><div style="position:absolute;left:0.0px;top:0.0px;width:7.4px;height:7.4px;background:#7ac0d8"></div><div style="position:absolute;left:7.2px;top:0.0px;width:7.4px;height:7.4px;background:#a0d0e0"></div><div style="position:absolute;left:14.4px;top:0.0px;width:7.4px;height:7.4px;background:#5a9ab0"></div><div style="position:absolute;left:21.6px;top:0.0px;width:7.4px;height:7.4px;background:#8ac8d8"></div><div style="position:absolute;left:28.8px;top:0.0px;width:7.4px;height:7.4px;background:#4a8aa0"></div><div style="position:absolute;left:0.0px;top:7.2px;width:7.4px;height:7.4px;background:#8ad0e0"></div><div style="position:absolute;left:7.2px;top:7.2px;width:7.4px;height:7.4px;background:#6ab0c8"></div><div style="position:absolute;left:14.4px;top:7.2px;width:7.4px;height:7.4px;background:#c0e0f0"></div><div style="position:absolute;left:21.6px;top:7.2px;width:7.4px;height:7.4px;background:#a0d0e0"></div><div style="position:absolute;left:28.8px;top:7.2px;width:7.4px;height:7.4px;background:#5a9ab8"></div><div style="position:absolute;left:0.0px;top:14.4px;width:7.4px;height:7.4px;background:#6ab8d0"></div><div style="position:absolute;left:7.2px;top:14.4px;width:7.4px;height:7.4px;background:#5aa0b8"></div><div style="position:absolute;left:14.4px;top:14.4px;width:7.4px;height:7.4px;background:#7ab8c8"></div><div style="position:absolute;left:21.6px;top:14.4px;width:7.4px;height:7.4px;background:#6ab0c8"></div><div style="position:absolute;left:28.8px;top:14.4px;width:7.4px;height:7.4px;background:#4a90a8"></div><div style="position:absolute;left:0.0px;top:21.6px;width:7.4px;height:7.4px;background:#4a7a90"></div><div style="position:absolute;left:7.2px;top:21.6px;width:7.4px;height:7.4px;background:#2a4a5a"></div><div style="position:absolute;left:14.4px;top:21.6px;width:7.4px;height:7.4px;background:#6a98a8"></div><div style="position:absolute;left:21.6px;top:21.6px;width:7.4px;height:7.4px;background:#3a5a6a"></div><div style="position:absolute;left:28.8px;top:21.6px;width:7.4px;height:7.4px;background:#4a7a8a"></div><div style="position:absolute;left:0.0px;top:28.8px;width:7.4px;height:7.4px;background:#c0c8c8"></div><div style="position:absolute;left:7.2px;top:28.8px;width:7.4px;height:7.4px;background:#e0e0d8"></div><div style="position:absolute;left:14.4px;top:28.8px;width:7.4px;height:7.4px;background:#a0a8a8"></div><div style="position:absolute;left:21.6px;top:28.8px;width:7.4px;height:7.4px;background:#e0e0d8"></div><div style="position:absolute;left:28.8px;top:28.8px;width:7.4px;height:7.4px;background:#8a9090"></div></div></div>
<div class="a" style="left:381.5px;width:167px;text-align:center;top:700.5px;font-size:14px;line-height:20px;color:#3d8ee0;">豪华小包</div>
<div class="a" style="left:548.5px;width:146px;text-align:center;top:700.5px;font-size:14px;line-height:20px;color:#333;">222</div>
<div class="a" style="left:694.5px;width:89px;text-align:center;top:700.5px;font-size:14px;line-height:20px;color:#333;">1.00</div>
<div class="a" style="left:783.5px;width:100px;text-align:center;top:700.5px;font-size:14px;line-height:20px;color:#3d8ee0;">14-20人</div>
<div class="a" style="left:883.5px;width:93px;text-align:center;top:700.5px;font-size:14px;line-height:20px;color:#333;">8</div>
<div class="a" style="left:1042.0px;top:700.0px;width:30px;height:19px;background:#18bc9c;border-radius:10px"></div>
<div class="a" style="left:1055.0px;top:702.0px;width:15px;height:15px;background:#fff;border-radius:50%"></div>
<div class="a" style="left:1178.5px;top:699.5px;width:75px;height:22px;background:#1b84e8;border-radius:2px;display:flex;align-items:center;justify-content:center;color:#fff;font-size:12px;font-weight:bold"><svg width="11" height="11" viewBox="0 0 11 11" style=""><circle cx="3" cy="3" r="2.1" fill="none" stroke="#fff" stroke-width="1.8"/><circle cx="8" cy="8" r="2.1" fill="none" stroke="#fff" stroke-width="1.8"/><path d="M4.3 4.3 L6.7 6.7" stroke="#fff" stroke-width="1.8"/></svg><span style="margin-left:4px">跳转链接</span></div>
<div class="a" style="left:1362.0px;top:700.0px;width:30px;height:19px;background:#18bc9c;border-radius:10px"></div>
<div class="a" style="left:1375.0px;top:702.0px;width:15px;height:15px;background:#fff;border-radius:50%"></div>
<div class="a" style="left:1498.5px;top:699.5px;width:75px;height:22px;background:#1b84e8;border-radius:2px;display:flex;align-items:center;justify-content:center;color:#fff;font-size:12px;font-weight:bold"><svg width="11" height="11" viewBox="0 0 11 11" style=""><circle cx="3" cy="3" r="2.1" fill="none" stroke="#fff" stroke-width="1.8"/><circle cx="8" cy="8" r="2.1" fill="none" stroke="#fff" stroke-width="1.8"/><path d="M4.3 4.3 L6.7 6.7" stroke="#fff" stroke-width="1.8"/></svg><span style="margin-left:4px">跳转链接</span></div>
<div class="a" style="left:1682.0px;top:700.0px;width:30px;height:19px;background:#18bc9c;border-radius:10px"></div>
<div class="a" style="left:1695.0px;top:702.0px;width:15px;height:15px;background:#fff;border-radius:50%"></div>
<div class="a" style="left:1801px;top:699.5px;width:22px;height:22px;background:#18bc9c;border-radius:2px"></div>
<div class="a" style="left:1806.5px;top:704.5px;line-height:0"><svg width="11" height="11" viewBox="0 0 11 11" style=""><path d="M2.4 8.6 L8.6 2.4" stroke="#fff" stroke-width="3.3" stroke-linecap="round"/></svg></div>
<div class="a" style="left:1827px;top:699.5px;width:21px;height:22px;background:#f75444;border-radius:2px"></div>
<div class="a" style="left:1832.5px;top:705.0px;line-height:0"><svg width="10" height="10.5" viewBox="0 0 10 10" style=""><rect x="3" y="0" width="4" height="1.4" fill="#fff"/><rect x="0" y="1.1" width="10" height="1.7" fill="#fff"/><path d="M1 3.2 H9 L8.5 10.5 H1.5 Z" fill="#fff"/><rect x="3.3" y="4.3" width="0.9" height="5" fill="#f75444"/><rect x="5.8" y="4.3" width="0.9" height="5" fill="#f75444"/></svg></div>
<div class="a" style="left:261px;top:737px;width:1611px;height:1px;background:#f7f7f7"></div>
<div class="a" style="left:276.0px;top:754.0px;width:13px;height:13px;border:1px solid #767676;border-radius:2px;box-sizing:border-box;background:#fff"></div>
<div class="a" style="left:328px;top:746.5px;width:30px;height:30px;overflow:hidden"><div style="position:absolute;left:-3px;top:-3px;width:36px;height:36px;filter:blur(1.1px)"><div style="position:absolute;left:0.0px;top:0.0px;width:7.4px;height:7.4px;background:#5aa8d8"></div><div style="position:absolute;left:7.2px;top:0.0px;width:7.4px;height:7.4px;background:#3a3a40"></div><div style="position:absolute;left:14.4px;top:0.0px;width:7.4px;height:7.4px;background:#e0e0e0"></div><div style="position:absolute;left:21.6px;top:0.0px;width:7.4px;height:7.4px;background:#3a3a40"></div><div style="position:absolute;left:28.8px;top:0.0px;width:7.4px;height:7.4px;background:#8ac8e0"></div><div style="position:absolute;left:0.0px;top:7.2px;width:7.4px;height:7.4px;background:#7ab8e0"></div><div style="position:absolute;left:7.2px;top:7.2px;width:7.4px;height:7.4px;background:#c0c0d0"></div><div style="position:absolute;left:14.4px;top:7.2px;width:7.4px;height:7.4px;background:#404050"></div><div style="position:absolute;left:21.6px;top:7.2px;width:7.4px;height:7.4px;background:#c0d0e0"></div><div style="position:absolute;left:28.8px;top:7.2px;width:7.4px;height:7.4px;background:#8ac8e0"></div><div style="position:absolute;left:0.0px;top:14.4px;width:7.4px;height:7.4px;background:#d0c0d8"></div><div style="position:absolute;left:7.2px;top:14.4px;width:7.4px;height:7.4px;background:#e0d8e8"></div><div style="position:absolute;left:14.4px;top:14.4px;width:7.4px;height:7.4px;background:#a0b0c8"></div><div style="position:absolute;left:21.6px;top:14.4px;width:7.4px;height:7.4px;background:#c0d8e8"></div><div style="position:absolute;left:28.8px;top:14.4px;width:7.4px;height:7.4px;background:#a0c8d8"></div><div style="position:absolute;left:0.0px;top:21.6px;width:7.4px;height:7.4px;background:#a08060"></div><div style="position:absolute;left:7.2px;top:21.6px;width:7.4px;height:7.4px;background:#e0c090"></div><div style="position:absolute;left:14.4px;top:21.6px;width:7.4px;height:7.4px;background:#f0e0c0"></div><div style="position:absolute;left:21.6px;top:21.6px;width:7.4px;height:7.4px;background:#e0c090"></div><div style="position:absolute;left:28.8px;top:21.6px;width:7.4px;height:7.4px;background:#a08060"></div><div style="position:absolute;left:0.0px;top:28.8px;width:7.4px;height:7.4px;background:#1a1a20"></div><div style="position:absolute;left:7.2px;top:28.8px;width:7.4px;height:7.4px;background:#8a6a40"></div><div style="position:absolute;left:14.4px;top:28.8px;width:7.4px;height:7.4px;background:#e0d0b0"></div><div style="position:absolute;left:21.6px;top:28.8px;width:7.4px;height:7.4px;background:#8a6a40"></div><div style="position:absolute;left:28.8px;top:28.8px;width:7.4px;height:7.4px;background:#1a1a20"></div></div></div>
<div class="a" style="left:381.5px;width:167px;text-align:center;top:751.5px;font-size:14px;line-height:20px;color:#3d8ee0;">豪华小包</div>
<div class="a" style="left:548.5px;width:146px;text-align:center;top:751.5px;font-size:14px;line-height:20px;color:#333;">555</div>
<div class="a" style="left:694.5px;width:89px;text-align:center;top:751.5px;font-size:14px;line-height:20px;color:#333;">2.00</div>
<div class="a" style="left:783.5px;width:100px;text-align:center;top:751.5px;font-size:14px;line-height:20px;color:#3d8ee0;">14-20人</div>
<div class="a" style="left:883.5px;width:93px;text-align:center;top:751.5px;font-size:14px;line-height:20px;color:#333;">4</div>
<div class="a" style="left:1042.0px;top:751.0px;width:30px;height:19px;background:#18bc9c;border-radius:10px"></div>
<div class="a" style="left:1055.0px;top:753.0px;width:15px;height:15px;background:#fff;border-radius:50%"></div>
<div class="a" style="left:1178.5px;top:750.5px;width:75px;height:22px;background:#1b84e8;border-radius:2px;display:flex;align-items:center;justify-content:center;color:#fff;font-size:12px;font-weight:bold"><svg width="11" height="11" viewBox="0 0 11 11" style=""><circle cx="3" cy="3" r="2.1" fill="none" stroke="#fff" stroke-width="1.8"/><circle cx="8" cy="8" r="2.1" fill="none" stroke="#fff" stroke-width="1.8"/><path d="M4.3 4.3 L6.7 6.7" stroke="#fff" stroke-width="1.8"/></svg><span style="margin-left:4px">跳转链接</span></div>
<div class="a" style="left:1362.0px;top:751.0px;width:30px;height:19px;background:#18bc9c;border-radius:10px"></div>
<div class="a" style="left:1375.0px;top:753.0px;width:15px;height:15px;background:#fff;border-radius:50%"></div>
<div class="a" style="left:1498.5px;top:750.5px;width:75px;height:22px;background:#1b84e8;border-radius:2px;display:flex;align-items:center;justify-content:center;color:#fff;font-size:12px;font-weight:bold"><svg width="11" height="11" viewBox="0 0 11 11" style=""><circle cx="3" cy="3" r="2.1" fill="none" stroke="#fff" stroke-width="1.8"/><circle cx="8" cy="8" r="2.1" fill="none" stroke="#fff" stroke-width="1.8"/><path d="M4.3 4.3 L6.7 6.7" stroke="#fff" stroke-width="1.8"/></svg><span style="margin-left:4px">跳转链接</span></div>
<div class="a" style="left:1682.0px;top:751.0px;width:30px;height:19px;background:#18bc9c;border-radius:10px"></div>
<div class="a" style="left:1695.0px;top:753.0px;width:15px;height:15px;background:#fff;border-radius:50%"></div>
<div class="a" style="left:1801px;top:750.5px;width:22px;height:22px;background:#18bc9c;border-radius:2px"></div>
<div class="a" style="left:1806.5px;top:755.5px;line-height:0"><svg width="11" height="11" viewBox="0 0 11 11" style=""><path d="M2.4 8.6 L8.6 2.4" stroke="#fff" stroke-width="3.3" stroke-linecap="round"/></svg></div>
<div class="a" style="left:1827px;top:750.5px;width:21px;height:22px;background:#f75444;border-radius:2px"></div>
<div class="a" style="left:1832.5px;top:756.0px;line-height:0"><svg width="10" height="10.5" viewBox="0 0 10 10" style=""><rect x="3" y="0" width="4" height="1.4" fill="#fff"/><rect x="0" y="1.1" width="10" height="1.7" fill="#fff"/><path d="M1 3.2 H9 L8.5 10.5 H1.5 Z" fill="#fff"/><rect x="3.3" y="4.3" width="0.9" height="5" fill="#f75444"/><rect x="5.8" y="4.3" width="0.9" height="5" fill="#f75444"/></svg></div>
<div class="a" style="left:261px;top:788px;width:1611px;height:51px;background:#f9f9f9"></div>
<div class="a" style="left:261px;top:788px;width:1611px;height:1px;background:#f7f7f7"></div>
<div class="a" style="left:276.0px;top:805.0px;width:13px;height:13px;border:1px solid #767676;border-radius:2px;box-sizing:border-box;background:#fff"></div>
<div class="a" style="left:328px;top:797.5px;width:30px;height:30px;overflow:hidden"><div style="position:absolute;left:-3px;top:-3px;width:36px;height:36px;filter:blur(1.1px)"><div style="position:absolute;left:0.0px;top:0.0px;width:7.4px;height:7.4px;background:#1a2a8a"></div><div style="position:absolute;left:7.2px;top:0.0px;width:7.4px;height:7.4px;background:#2a3ab0"></div><div style="position:absolute;left:14.4px;top:0.0px;width:7.4px;height:7.4px;background:#3a4ac0"></div><div style="position:absolute;left:21.6px;top:0.0px;width:7.4px;height:7.4px;background:#2a3ab0"></div><div style="position:absolute;left:28.8px;top:0.0px;width:7.4px;height:7.4px;background:#1a2a8a"></div><div style="position:absolute;left:0.0px;top:7.2px;width:7.4px;height:7.4px;background:#1a1a7a"></div><div style="position:absolute;left:7.2px;top:7.2px;width:7.4px;height:7.4px;background:#3a4ac0"></div><div style="position:absolute;left:14.4px;top:7.2px;width:7.4px;height:7.4px;background:#5a7ae0"></div><div style="position:absolute;left:21.6px;top:7.2px;width:7.4px;height:7.4px;background:#3a4ac0"></div><div style="position:absolute;left:28.8px;top:7.2px;width:7.4px;height:7.4px;background:#1a1a7a"></div><div style="position:absolute;left:0.0px;top:14.4px;width:7.4px;height:7.4px;background:#1a1a6a"></div><div style="position:absolute;left:7.2px;top:14.4px;width:7.4px;height:7.4px;background:#4a6ae0"></div><div style="position:absolute;left:14.4px;top:14.4px;width:7.4px;height:7.4px;background:#8ab0ff"></div><div style="position:absolute;left:21.6px;top:14.4px;width:7.4px;height:7.4px;background:#4a6ae0"></div><div style="position:absolute;left:28.8px;top:14.4px;width:7.4px;height:7.4px;background:#1a1a6a"></div><div style="position:absolute;left:0.0px;top:21.6px;width:7.4px;height:7.4px;background:#10105a"></div><div style="position:absolute;left:7.2px;top:21.6px;width:7.4px;height:7.4px;background:#2a2a9a"></div><div style="position:absolute;left:14.4px;top:21.6px;width:7.4px;height:7.4px;background:#4a5ac0"></div><div style="position:absolute;left:21.6px;top:21.6px;width:7.4px;height:7.4px;background:#2a2a9a"></div><div style="position:absolute;left:28.8px;top:21.6px;width:7.4px;height:7.4px;background:#10105a"></div><div style="position:absolute;left:0.0px;top:28.8px;width:7.4px;height:7.4px;background:#080830"></div><div style="position:absolute;left:7.2px;top:28.8px;width:7.4px;height:7.4px;background:#1a1a6a"></div><div style="position:absolute;left:14.4px;top:28.8px;width:7.4px;height:7.4px;background:#2a3a8a"></div><div style="position:absolute;left:21.6px;top:28.8px;width:7.4px;height:7.4px;background:#1a1a6a"></div><div style="position:absolute;left:28.8px;top:28.8px;width:7.4px;height:7.4px;background:#080830"></div></div></div>
<div class="a" style="left:381.5px;width:167px;text-align:center;top:802.5px;font-size:14px;line-height:20px;color:#3d8ee0;">电音派对房</div>
<div class="a" style="left:548.5px;width:146px;text-align:center;top:802.5px;font-size:14px;line-height:20px;color:#333;">999</div>
<div class="a" style="left:694.5px;width:89px;text-align:center;top:802.5px;font-size:14px;line-height:20px;color:#333;">500.00</div>
<div class="a" style="left:783.5px;width:100px;text-align:center;top:802.5px;font-size:14px;line-height:20px;color:#3d8ee0;">14-20人</div>
<div class="a" style="left:883.5px;width:93px;text-align:center;top:802.5px;font-size:14px;line-height:20px;color:#333;">4</div>
<div class="a" style="left:1042.0px;top:802.0px;width:30px;height:19px;background:#18bc9c;border-radius:10px"></div>
<div class="a" style="left:1055.0px;top:804.0px;width:15px;height:15px;background:#fff;border-radius:50%"></div>
<div class="a" style="left:1178.5px;top:801.5px;width:75px;height:22px;background:#1b84e8;border-radius:2px;display:flex;align-items:center;justify-content:center;color:#fff;font-size:12px;font-weight:bold"><svg width="11" height="11" viewBox="0 0 11 11" style=""><circle cx="3" cy="3" r="2.1" fill="none" stroke="#fff" stroke-width="1.8"/><circle cx="8" cy="8" r="2.1" fill="none" stroke="#fff" stroke-width="1.8"/><path d="M4.3 4.3 L6.7 6.7" stroke="#fff" stroke-width="1.8"/></svg><span style="margin-left:4px">跳转链接</span></div>
<div class="a" style="left:1362.0px;top:802.0px;width:30px;height:19px;background:#18bc9c;border-radius:10px"></div>
<div class="a" style="left:1375.0px;top:804.0px;width:15px;height:15px;background:#fff;border-radius:50%"></div>
<div class="a" style="left:1498.5px;top:801.5px;width:75px;height:22px;background:#1b84e8;border-radius:2px;display:flex;align-items:center;justify-content:center;color:#fff;font-size:12px;font-weight:bold"><svg width="11" height="11" viewBox="0 0 11 11" style=""><circle cx="3" cy="3" r="2.1" fill="none" stroke="#fff" stroke-width="1.8"/><circle cx="8" cy="8" r="2.1" fill="none" stroke="#fff" stroke-width="1.8"/><path d="M4.3 4.3 L6.7 6.7" stroke="#fff" stroke-width="1.8"/></svg><span style="margin-left:4px">跳转链接</span></div>
<div class="a" style="left:1682.0px;top:802.0px;width:30px;height:19px;background:#18bc9c;border-radius:10px"></div>
<div class="a" style="left:1695.0px;top:804.0px;width:15px;height:15px;background:#fff;border-radius:50%"></div>
<div class="a" style="left:1801px;top:801.5px;width:22px;height:22px;background:#18bc9c;border-radius:2px"></div>
<div class="a" style="left:1806.5px;top:806.5px;line-height:0"><svg width="11" height="11" viewBox="0 0 11 11" style=""><path d="M2.4 8.6 L8.6 2.4" stroke="#fff" stroke-width="3.3" stroke-linecap="round"/></svg></div>
<div class="a" style="left:1827px;top:801.5px;width:21px;height:22px;background:#f75444;border-radius:2px"></div>
<div class="a" style="left:1832.5px;top:807.0px;line-height:0"><svg width="10" height="10.5" viewBox="0 0 10 10" style=""><rect x="3" y="0" width="4" height="1.4" fill="#fff"/><rect x="0" y="1.1" width="10" height="1.7" fill="#fff"/><path d="M1 3.2 H9 L8.5 10.5 H1.5 Z" fill="#fff"/><rect x="3.3" y="4.3" width="0.9" height="5" fill="#f75444"/><rect x="5.8" y="4.3" width="0.9" height="5" fill="#f75444"/></svg></div>
<div class="a" style="left:261px;top:839px;width:1611px;height:1px;background:#f7f7f7"></div>
<div class="a" style="left:276.0px;top:856.0px;width:13px;height:13px;border:1px solid #767676;border-radius:2px;box-sizing:border-box;background:#fff"></div>
<div class="a" style="left:328px;top:848.5px;width:30px;height:30px;background:linear-gradient(135deg,#56b4e2 0%,#44a2d6 60%,#3a96cc 100%);border-radius:2px"></div>
<div class="a" style="left:381.5px;width:167px;text-align:center;top:853.5px;font-size:14px;line-height:20px;color:#3d8ee0;">电音派对房</div>
<div class="a" style="left:548.5px;width:146px;text-align:center;top:853.5px;font-size:14px;line-height:20px;color:#333;">888</div>
<div class="a" style="left:694.5px;width:89px;text-align:center;top:853.5px;font-size:14px;line-height:20px;color:#333;">500.00</div>
<div class="a" style="left:783.5px;width:100px;text-align:center;top:853.5px;font-size:14px;line-height:20px;color:#3d8ee0;">16-24人</div>
<div class="a" style="left:883.5px;width:93px;text-align:center;top:853.5px;font-size:14px;line-height:20px;color:#333;">3</div>
<div class="a" style="left:1042.0px;top:853.0px;width:30px;height:19px;background:#18bc9c;border-radius:10px"></div>
<div class="a" style="left:1055.0px;top:855.0px;width:15px;height:15px;background:#fff;border-radius:50%"></div>
<div class="a" style="left:1178.5px;top:852.5px;width:75px;height:22px;background:#1b84e8;border-radius:2px;display:flex;align-items:center;justify-content:center;color:#fff;font-size:12px;font-weight:bold"><svg width="11" height="11" viewBox="0 0 11 11" style=""><circle cx="3" cy="3" r="2.1" fill="none" stroke="#fff" stroke-width="1.8"/><circle cx="8" cy="8" r="2.1" fill="none" stroke="#fff" stroke-width="1.8"/><path d="M4.3 4.3 L6.7 6.7" stroke="#fff" stroke-width="1.8"/></svg><span style="margin-left:4px">跳转链接</span></div>
<div class="a" style="left:1362.0px;top:853.0px;width:30px;height:19px;background:#18bc9c;border-radius:10px"></div>
<div class="a" style="left:1375.0px;top:855.0px;width:15px;height:15px;background:#fff;border-radius:50%"></div>
<div class="a" style="left:1456.5px;width:160px;text-align:center;top:853.5px;font-size:14px;line-height:20px;color:#777;">未配置</div>
<div class="a" style="left:1682.0px;top:853.0px;width:30px;height:19px;background:#18bc9c;border-radius:10px"></div>
<div class="a" style="left:1695.0px;top:855.0px;width:15px;height:15px;background:#fff;border-radius:50%"></div>
<div class="a" style="left:1801px;top:852.5px;width:22px;height:22px;background:#18bc9c;border-radius:2px"></div>
<div class="a" style="left:1806.5px;top:857.5px;line-height:0"><svg width="11" height="11" viewBox="0 0 11 11" style=""><path d="M2.4 8.6 L8.6 2.4" stroke="#fff" stroke-width="3.3" stroke-linecap="round"/></svg></div>
<div class="a" style="left:1827px;top:852.5px;width:21px;height:22px;background:#f75444;border-radius:2px"></div>
<div class="a" style="left:1832.5px;top:858.0px;line-height:0"><svg width="10" height="10.5" viewBox="0 0 10 10" style=""><rect x="3" y="0" width="4" height="1.4" fill="#fff"/><rect x="0" y="1.1" width="10" height="1.7" fill="#fff"/><path d="M1 3.2 H9 L8.5 10.5 H1.5 Z" fill="#fff"/><rect x="3.3" y="4.3" width="0.9" height="5" fill="#f75444"/><rect x="5.8" y="4.3" width="0.9" height="5" fill="#f75444"/></svg></div>
<div class="a" style="left:261px;top:907.0px;font-size:14px;line-height:20px;color:#333;">显示第 1 到第 10 条记录，总共 29 条记录 每页显示</div>
<div class="a" style="left:583px;top:902px;width:52px;height:32px;background:#f4f4f4;border:1px solid #ddd;box-sizing:border-box;border-radius:3px"></div>
<div class="a" style="left:596.5px;top:907.0px;font-size:14px;line-height:20px;color:#333;">10</div>
<div class="a" style="left:614px;top:914px;line-height:0"><svg width="8" height="5" viewBox="0 0 8 5" style=""><path d="M0 4.5 H8 L4 0 Z" fill="#333"/></svg></div>
<div class="a" style="left:640px;top:907.0px;font-size:14px;line-height:20px;color:#333;">条记录</div>
<div class="a" style="left:1528px;top:900px;width:68px;height:34px;background:#fbfbfb;border:1px solid #ddd;box-sizing:border-box"></div>
<div class="a" style="left:1528.0px;width:68px;text-align:center;top:907.0px;font-size:14px;line-height:20px;color:#555;">上一页</div>
<div class="a" style="left:1595px;top:900px;width:33px;height:34px;background:#444c69"></div>
<div class="a" style="left:1595.0px;width:33px;text-align:center;top:907.0px;font-size:14px;line-height:20px;color:#fff;font-weight:bold;">1</div>
<div class="a" style="left:1627px;top:900px;width:34px;height:34px;background:#fbfbfb;border:1px solid #ddd;box-sizing:border-box"></div>
<div class="a" style="left:1627.0px;width:34px;text-align:center;top:907.0px;font-size:14px;line-height:20px;color:#555;">2</div>
<div class="a" style="left:1660px;top:900px;width:34px;height:34px;background:#fbfbfb;border:1px solid #ddd;box-sizing:border-box"></div>
<div class="a" style="left:1660.0px;width:34px;text-align:center;top:907.0px;font-size:14px;line-height:20px;color:#555;">3</div>
<div class="a" style="left:1693px;top:900px;width:68px;height:34px;background:#fbfbfb;border:1px solid #ddd;box-sizing:border-box"></div>
<div class="a" style="left:1693.0px;width:68px;text-align:center;top:907.0px;font-size:14px;line-height:20px;color:#555;">下一页</div>
<div class="a" style="left:1766px;top:900px;width:50px;height:34px;background:#fff;border:1px solid #ddd;box-sizing:border-box"></div>
<div class="a" style="left:1821px;top:901px;width:52px;height:32px;background:#f4f4f4;border:1px solid #ddd;box-sizing:border-box;border-radius:3px"></div>
<div class="a" style="left:1821.0px;width:52px;text-align:center;top:906.0px;font-size:13px;line-height:20px;color:#333;font-weight:bold;">跳转</div>
<div class="a" style="left:1631px;top:858.0px;font-size:21px;line-height:20px;color:rgba(120,120,120,0.55);line-height:24px;">激活 Windows</div>
<div class="a" style="left:1631px;top:883.0px;font-size:14px;line-height:20px;color:rgba(120,120,120,0.55);letter-spacing:1.1px;">转到“设置”以激活 Windows。</div>
</body></html>
